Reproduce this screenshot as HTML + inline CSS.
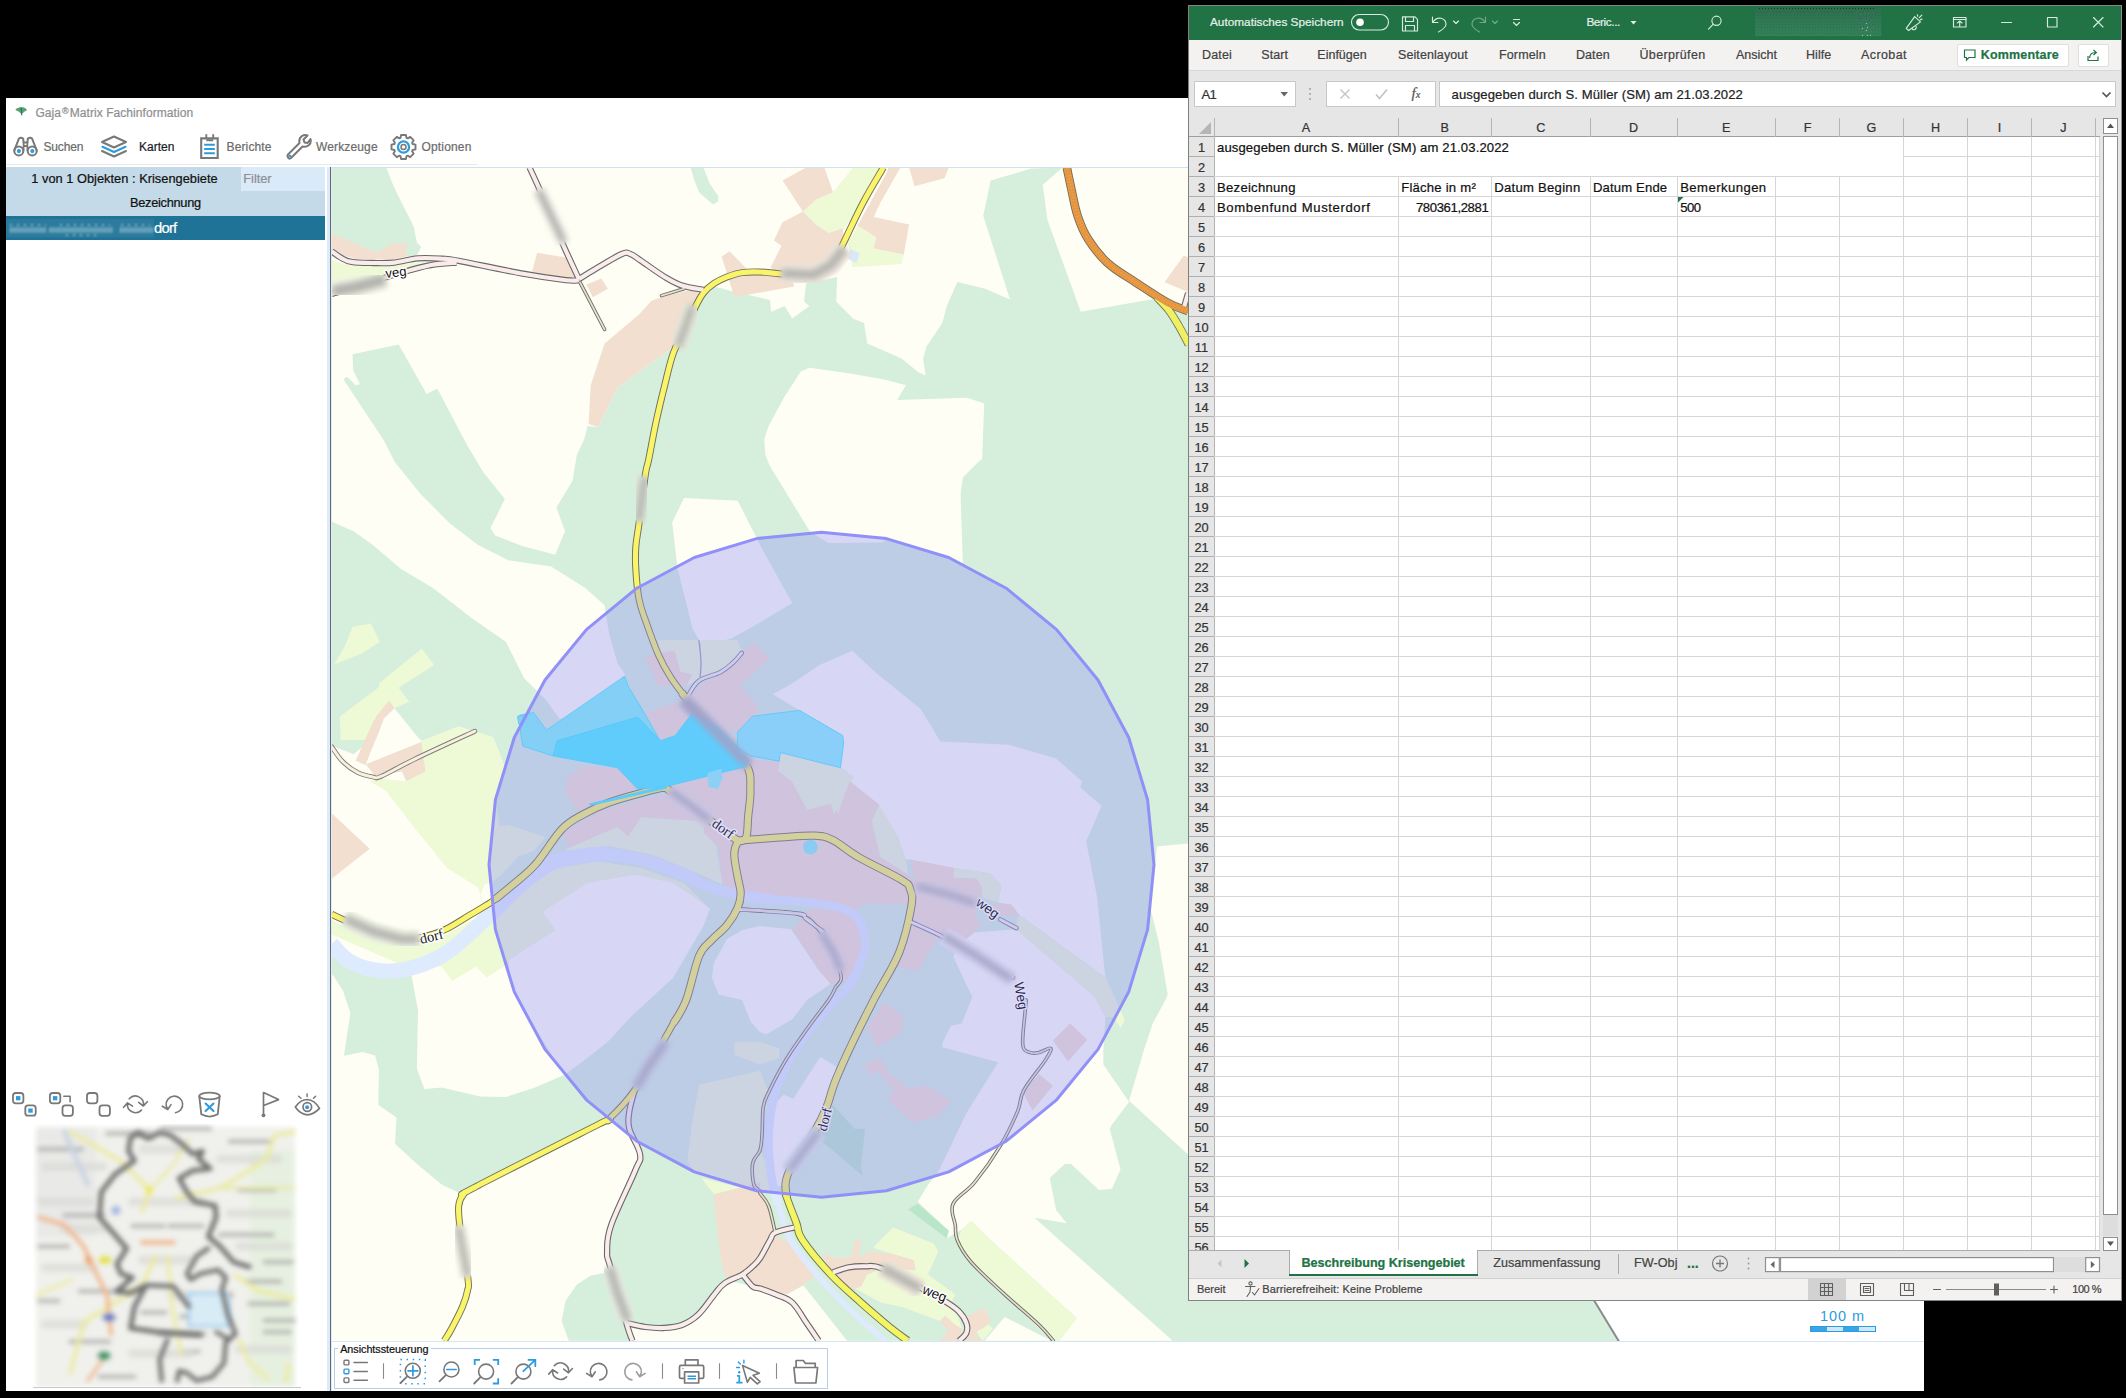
<!DOCTYPE html><html lang="de"><head><meta charset="utf-8"><title>Gaja Matrix Fachinformation</title><style>

*{box-sizing:border-box;margin:0;padding:0}
html,body{width:2126px;height:1398px;background:#000;overflow:hidden}
body{position:relative;font-family:"Liberation Sans",sans-serif;}
.abs,.t,svg{position:absolute}
.t{white-space:nowrap;line-height:1;transform-origin:0 0;-webkit-text-stroke:0.22px currentColor}
#gaja{position:absolute;left:6px;top:98px;width:1918px;height:1293px;background:#fff}
.gt{font-size:12.6px;color:#909090}
.tb{font-size:12.6px;color:#6a6a6a;top:141px}
.ic{fill:none;stroke:#787878;stroke-width:1.6;stroke-linecap:round;stroke-linejoin:round}
.ic2{fill:none;stroke:#787878;stroke-width:1.3;stroke-linecap:round;stroke-linejoin:round}
.bl{stroke:#2e9be0}
.blf{fill:#2e9be0;stroke:none}
.hd{font-size:12.6px;color:#111}


#xl{position:absolute;left:1188px;top:5px;width:934px;height:1296px;background:#e6e6e6;overflow:hidden}
#xl .t{color:#3b3b3b}
.xt{font-size:12.6px;color:#e4efe8 !important}
.xm{font-size:13.6px;top:48px;color:#404040 !important}
.xc{font-size:13.4px;color:#111 !important}
.xh{font-size:13.4px;color:#333 !important;text-align:center}
.xi{fill:none;stroke:#d6eadd;stroke-width:1.15;stroke-linecap:round;stroke-linejoin:round}
.xg{fill:none;stroke:#5f5f5f;stroke-width:1.1;stroke-linecap:round;stroke-linejoin:round}

</style></head><body>
<div id="gaja"></div>
<svg style="left:14px;top:105px" width="15" height="12" viewBox="14 105 15 12"><path d="M15.400 109.600 Q16 108 18.500 107.700 L20.500 107 L23 107.200 Q26 108 27 110 Q26 111.300 24.500 111.500 Q23 113 22.300 113.600 L21.700 115.500 L21 113.600 Q19.500 112.500 18.500 111.500 Q16.500 111.300 15.400 109.600Z" fill="#5ba274"/><path d="M21.500 108 L21.700 115.200" stroke="#2d7d50" stroke-width="1.100"/><circle cx="20.400" cy="109.600" r="0.600" fill="#2a70b0"/></svg>
<div class="t" style="left:35.40px;top:106.74px;font-size:12px;color:#8f8f8f;letter-spacing:0.065px;"><span>Gaja<span style="font-size:9px;position:relative;top:-3px;margin:0 1px">®</span>Matrix Fachinformation</span></div>
<svg style="left:12px;top:134px" width="28" height="26" viewBox="0 0 28 26">
<path class="ic" style="stroke-width:2" d="M2.300 16.500 L6.800 4.800 Q9 2.600 11.200 4.800 L11.600 8.500 L15.400 8.500 L15.800 4.800 Q18 2.600 20.200 4.800 L24.700 16.500"/>
<path class="ic" style="stroke-width:1.800" d="M11.600 8.500 L11.600 16.500 M15.400 8.500 L15.400 16.500 M11.600 12 L15.400 12"/>
<circle class="ic" style="stroke-width:2" cx="6.800" cy="16.900" r="4.500"/><circle class="ic" style="stroke-width:2" cx="20.200" cy="16.900" r="4.500"/>
<circle class="blf" cx="6.900" cy="17.100" r="2.100"/><circle class="blf" cx="20.300" cy="17.100" r="2.100"/></svg>
<div class="t" style="left:43.40px;top:141.04px;font-size:12px;color:#6c6c6c;letter-spacing:-0.117px;"><span>Suchen</span></div>
<svg style="left:100px;top:134px" width="28" height="26" viewBox="0 0 28 26">
<path class="ic" style="stroke-width:2" d="M14 2.500 L26 8 L14 13.500 L2 8 Z"/>
<path class="ic bl" style="stroke-width:2.200" d="M2.500 12.800 L14 18 L25.500 12.800"/>
<path class="ic" style="stroke-width:2" d="M2 17 L14 22.500 L26 17"/></svg>
<div class="t" style="left:139.00px;top:141.04px;font-size:12px;color:#1c1c28;letter-spacing:0.007px;"><span>Karten</span></div>
<svg style="left:199px;top:132px" width="22" height="28" viewBox="199 132 22 28">
<path class="ic" style="stroke-width:2.100;stroke-linejoin:miter" d="M201.200 138.400 L217.700 138.400 L217.700 158 L201.200 158 Z"/>
<path class="ic" style="stroke-width:1.900;stroke-linecap:butt" d="M206.300 134.300 L206.300 138.400 M213.200 134.300 L213.200 138.400 M206.300 140.300 L213.200 140.300"/>
<path class="ic bl" style="stroke-width:2;stroke-linecap:butt" d="M204.200 144.800 L214.800 144.800 M204.200 149 L214.800 149 M204.200 153.200 L214.800 153.200"/></svg>
<div class="t" style="left:226.50px;top:141.04px;font-size:12px;color:#6c6c6c;letter-spacing:0.134px;"><span>Berichte</span></div>
<svg style="left:285px;top:133px" width="27" height="28" viewBox="0 0 27 28">
<path class="ic" style="stroke-width:2" d="M3.500 25 Q1.500 23 3.500 21 L14.500 10 Q13.500 5.500 17 3 Q19.500 1.500 22.500 2.500 L18.500 6.500 L19.500 9.500 L22.500 10 L25.500 6 Q26.500 9.500 24 12 Q21 14.500 17.500 13.500 L6.500 24.500 Q5 26.500 3.500 25 Z"/>
<circle class="blf" cx="5" cy="23" r="1.300"/></svg>
<div class="t" style="left:316.00px;top:141.04px;font-size:12px;color:#6c6c6c;letter-spacing:0.135px;"><span>Werkzeuge</span></div>
<svg style="left:390.200px;top:133.600px" width="27" height="26" viewBox="0 0 27 26"><path class="ic" style="stroke-width:1.900" d="M25.5 10.6 L25.5 15.4 L22.6 16.0 L22.1 17.3 L23.7 19.7 L20.2 23.2 L17.8 21.6 L16.5 22.1 L15.9 25.0 L11.1 25.0 L10.5 22.1 L9.2 21.6 L6.8 23.2 L3.3 19.7 L4.9 17.3 L4.4 16.0 L1.5 15.4 L1.5 10.6 L4.4 10.0 L4.9 8.7 L3.3 6.3 L6.8 2.8 L9.2 4.4 L10.5 3.9 L11.1 1.0 L15.9 1.0 L16.5 3.9 L17.8 4.4 L20.2 2.8 L23.7 6.3 L22.1 8.7 L22.6 10.0Z"/><circle class="ic bl" style="stroke-width:2.300" cx="13.500" cy="13" r="5.600"/><circle class="ic" style="stroke-width:1.500" cx="13.500" cy="13" r="2.500"/></svg>
<div class="t" style="left:421.50px;top:141.04px;font-size:12px;color:#6c6c6c;letter-spacing:0.162px;"><span>Optionen</span></div>
<div class="abs" style="left:6px;top:164px;width:472px;height:1px;background:#e9e9e9"></div>
<div class="abs" style="left:6px;top:167px;width:320px;height:49px;background:#c4dae8"></div>
<div class="abs" style="left:241px;top:167px;width:84px;height:24px;background:#dbeaf8"></div>
<div class="t" style="left:31.30px;top:173.36px;font-size:12.8px;color:#111;letter-spacing:0.022px;"><span>1 von 1 Objekten : Krisengebiete</span></div>
<div class="t" style="left:243.30px;top:173.36px;font-size:12.8px;color:#8a8f96;letter-spacing:-0.023px;"><span>Filter</span></div>
<div class="t" style="left:130.00px;top:197.36px;font-size:12.8px;color:#111;letter-spacing:-0.291px;"><span>Bezeichnung</span></div>
<div class="abs" style="left:6px;top:216px;width:320px;height:24px;background:#1e7396"></div>
<svg style="left:6px;top:216px" width="170" height="24" viewBox="6 216 170 24"><defs><filter id="b3" filterUnits="userSpaceOnUse" x="0" y="210" width="180" height="36"><feGaussianBlur stdDeviation="0.9"/></filter></defs><rect x="6" y="219" width="148" height="18.500" fill="#2c7b9d"/><g filter="url(#b3)" fill="none" stroke="#a5cadb" stroke-width="5.500" stroke-dasharray="1.600 1.300" stroke-opacity="0.85"><path d="M10 230 L46 230"/><path d="M49.500 230 L113.500 230"/><path d="M120 230 L153 230"/></g><g filter="url(#b3)" fill="none" stroke="#a5cadb" stroke-width="2" stroke-dasharray="2 5" stroke-opacity="0.7"><path d="M10 225 L46 225 M60 225 L110 225 M121 225 L150 225 M66 235 L100 235"/></g></svg>
<div class="t" style="left:153.90px;top:221.07px;font-size:14.8px;color:#fff;letter-spacing:-0.725px;"><span>dorf</span></div>
<div class="abs" style="left:325px;top:167px;width:7px;height:1224px;background:#fff"></div>
<div class="abs" style="left:327px;top:167px;width:5px;height:1224px;background:#dcebf9"></div>
<div class="abs" style="left:329.800px;top:167px;width:1.200px;height:1224px;background:#686868"></div>
<div class="abs" style="left:332px;top:166.500px;width:1592px;height:1.500px;background:#cfe2f3"></div>
<svg id="map" style="left:332px;top:168px" width="1592" height="1173" viewBox="332 168 1592 1173">
<defs><filter id="bl" x="-30%" y="-30%" width="160%" height="160%"><feGaussianBlur stdDeviation="3"/></filter><filter id="bl2" x="-30%" y="-30%" width="160%" height="160%"><feGaussianBlur stdDeviation="1.6"/></filter><clipPath id="mc"><rect x="332" y="168" width="1592" height="1173"/></clipPath></defs>
<g clip-path="url(#mc)">
<rect x="332" y="168" width="1592" height="1173" fill="#fff"/>
<polygon points="332,168 1700,168 1593.4,1300 1619,1341.5 332,1341.5" fill="#fffef5"/>
<polygon points="331.7,167.5 386.2,167.5 394.4,187.9 413.7,226.5 416.9,242.6 421.2,246.9 418.0,253.3 415.8,256.6 331.7,256.6" fill="#d6efdd"/>
<polygon points="690.5,167.5 703.4,167.5 709.8,183.6 718.4,196.5 717.9,201.8 713.0,204.6 699.1,192.2 694.8,181.5" fill="#d6efdd"/>
<polygon points="352.5,354.2 398.7,344.5 426.6,393.9 437.3,388.5 467.3,445.4 483.4,472.2 504.9,499.0 490.5,528.0 495.2,535.5 523.1,546.2 555.3,554.8 565.0,531.2 556.4,507.6 572.5,480.8 576.8,455.0 584.3,438.9 587.5,426.1 598.2,427.1 617.5,387.4 673.3,346.7 681.9,329.5 692.6,303.8 699.1,293.0 707.6,285.5 770.0,300.0 822.0,865.0 505.9,769.4 493.1,737.2 458.7,726.4 420.1,741.5 379.4,732.9 353.6,754.3 331.7,745.7 331.7,521.5 343.3,379.3 347.2,376.7 355.7,385.3 360.0,384.2 353.2,370.3" fill="#d6efdd"/>
<polygon points="750.0,300.0 707.6,285.5 723.7,288.7 742.0,324.1 760.0,316.6 784.7,305.9 792.2,318.4 809.4,305.9 804.0,301.6 806.1,283.4 837.2,276.9 836.2,301.6 853.3,318.8 864.1,323.1 867.3,343.5 901.6,358.5 918.8,372.4 925.6,375.6 923.1,358.5 926.3,346.7 942.4,323.1 946.7,305.9 957.4,281.9 985.3,288.7 1010.0,299.5 983.2,215.8 990.7,180.4 1031.4,168.6 1062.5,167.5 1042.8,184.7 1047.5,220.1 1080.8,311.7 1163.4,297.3 1188.1,308.1 1188.1,344.5 1300.0,345.0 1593.4,1300.0 1619.0,1341.5 847.0,1340.7 803.5,1285.5 786.3,1294.6 760.0,1287.5 726.4,1280.5 714.3,1294.6 698.1,1314.8 681.9,1325.0 663.7,1328.0 645.5,1327.0 626.3,1322.9 610.1,1266.3 607.1,1252.1 611.1,1268.2 607.9,1253.2 611.1,1225.3 634.7,1171.7 640.1,1154.5 630.4,1137.3 700.0,1000.0 800.0,865.0" fill="#d6efdd"/>
<polygon points="821.5,532.2 886.4,538.6 948.7,557.5 1006.2,588.2 1056.6,629.6 1098.0,680.0 1128.7,737.5 1147.6,799.8 1154.0,864.7 1147.6,929.6 1128.7,991.9 1098.0,1049.4 1056.6,1099.8 1006.2,1141.2 948.7,1171.9 886.4,1190.8 821.5,1197.2 756.6,1190.8 694.3,1171.9 636.8,1141.2 586.4,1099.8 545.0,1049.4 514.3,991.9 495.4,929.6 489.0,864.7 495.4,799.8 514.3,737.5 545.0,680.0 586.4,629.6 636.8,588.2 694.3,557.5 756.6,538.6" fill="#d6efdd"/>
<polygon points="331.7,956.0 351.5,968.9 383.6,977.5 411.5,975.3 418.0,1010.7 416.9,1068.7 424.4,1089.0 441.6,1087.5 480.2,1096.6 505.9,1097.0 533.8,1088.0 563.9,1075.1 608.9,1096.6 608.9,1120.2 598.2,1124.5 475.9,1186.7 463.0,1194.8 441.6,1184.5 415.8,1163.1 395.0,1143.8 396.5,1117.6 378.3,1105.1 378.9,1069.7 375.1,1055.4 362.2,1052.1 343.9,1055.8 350.4,1012.9 342.9,990.4 331.7,973.2" fill="#d6efdd"/>
<polygon points="561.6,1320.9 565.6,1300.7 576.8,1284.5 590.9,1275.4 607.1,1272.4 613.2,1280.5 626.3,1322.9 632.4,1340.7 568.7,1340.7" fill="#d6efdd"/>
<polygon points="331.7,374.6 343.3,379.3 383.6,440.0 394.4,461.5 420.1,493.6 450.2,523.7 478.1,545.1 508.1,560.2 551.0,566.6 585.3,588.1 604.6,605.2 608.9,633.1 617.5,663.2 626.1,676.0 598.2,708.2 559.6,718.9 546.7,700.7 537.1,691.0 524.2,678.2 505.9,641.7 471.6,618.1 433.0,588.1 400.8,568.7 372.9,545.1 353.6,531.2 331.7,521.5" fill="#fffef5"/>
<polygon points="684.0,497.9 737.7,500.7 755.9,536.6 760.0,545.1 792.2,603.1 760.0,622.4 731.2,638.5 711.9,643.8 701.2,643.8 692.6,628.8 677.6,568.7 672.2,522.6" fill="#fffef5"/>
<polygon points="809.4,367.7 850.1,373.5 886.6,379.9 905.9,385.3 897.3,399.9 967.1,397.7 984.2,403.5 982.1,460.0 981.0,459.3 962.8,477.5 960.6,493.6 962.8,563.4 947.7,557.6 885.5,538.7 883.4,542.6 828.7,543.0 810.4,532.3 769.7,465.7 765.4,455.0 764.3,438.9 768.6,426.1 783.6,398.2 800.8,371.4" fill="#fffef5"/>
<polygon points="852.3,650.7 819.0,665.3 792.2,683.5 772.9,694.3 799.7,710.4 842.6,735.0 843.7,739.3 840.5,767.2 853.3,776.9 850.1,782.2 879.1,804.8 876.9,812.3 897.3,835.9 905.9,859.5 910.2,859.5 954.2,868.1 990.7,873.4 1001.4,885.2 998.2,902.4 1011.0,904.5 1019.6,915.3 1105.5,977.5 1105.5,979.6 1096.9,895.9 1086.1,841.2 1101.6,805.8 1080.1,787.6 1081.9,781.2 1056.1,758.6 1008.9,744.7 940.2,741.5 927.4,720.0 920.9,709.3 875.9,672.8" fill="#fffef5"/>
<polygon points="974.6,932.4 1016.4,929.2 1094.7,996.8 1105.5,1017.2 1103.3,1050.4 1103.3,1064.4 1129.1,1101.9 1111.9,1124.5 1109.7,1128.7 1120.5,1169.5 1111.9,1188.8 1099.0,1189.9 1071.1,1164.1 1064.7,1164.1 1049.7,1178.1 1056.1,1210.3 1066.8,1223.2 1034.6,1217.8 1059.3,1239.9 1172.6,1340.7 1059.4,1340.7 1076.5,1317.9 990.6,1240.0 971.4,1221.0 961.7,1229.6 946.7,1238.2 948.8,1230.7 917.7,1201.7 929.5,1182.4 935.9,1175.9 946.7,1154.5 966.0,1113.7 998.2,1062.2 942.4,1047.2 942.4,1042.9 951.0,1025.7 961.7,1023.6 972.4,996.8 966.0,983.9 953.1,956.0 966.0,938.9" fill="#fffef5"/>
<polygon points="1157.0,846.6 1188.1,843.4 1300.0,840.0 1300.0,1150.0 1188.1,1154.5 1129.1,1100.8 1144.1,1049.4 1152.7,1023.6 1165.5,1000.0 1167.7,994.6 1159.1,943.2 1150.5,908.8" fill="#fffef5"/>
<polygon points="1004.7,1316.9 1051.3,1340.7 984.5,1340.7 994.6,1329.0" fill="#fffef5"/>
<polygon points="331.7,259.8 349.3,265.6 392.2,265.6 430.8,260.8 394.4,271.6 331.7,297.3" fill="#eef9d5"/>
<polygon points="853.3,167.5 880.2,167.5 863.0,202.9 842.6,230.8 842.6,228.2 828.7,233.0 815.8,224.4 802.9,211.5 815.8,199.7 833.0,192.2" fill="#eef9d5"/>
<polygon points="848.0,242.6 857.6,225.4 876.3,237.2 873.7,248.4 903.8,254.4 901.6,264.1 852.3,267.3 850.1,254.4" fill="#eef9d5"/>
<polygon points="352.5,626.7 370.8,623.5 379.8,641.7 362.2,653.5 334.3,664.2 345.0,646.0" fill="#eef9d5"/>
<polygon points="421.8,648.6 434.1,664.9 398.7,687.8 409.4,701.8 394.4,708.2 389.0,700.7 376.1,716.8 367.5,740.0 340.7,740.0 339.7,716.8 379.4,686.8 378.9,683.5" fill="#eef9d5"/>
<polygon points="381.5,779.0 406.2,781.2 425.5,771.5 420.1,741.5 458.7,726.4 493.1,737.2 505.9,769.4 495.2,797.2 499.5,826.2 508.1,825.1 545.6,836.9 533.8,850.9 518.8,856.3 499.5,876.6 490.9,883.1 484.5,884.1 480.2,895.9 484.5,906.7 478.1,887.4 446.9,868.1 415.8,829.4 385.8,790.8 369.7,781.2" fill="#eef9d5"/>
<polygon points="331.7,919.5 342.9,926.0 372.9,938.9 405.1,945.3 424.4,943.2 445.9,934.6 469.5,921.7 490.9,908.8 523.1,887.4 555.3,868.1 598.2,861.6 641.1,868.1 684.0,883.1 709.8,908.8 703.4,926.0 555.3,930.3 508.1,960.3 504.9,965.7 486.6,977.5 475.9,966.8 452.3,980.7 441.6,966.8 400.8,964.6 331.7,934.6" fill="#eef9d5"/>
<polygon points="542.4,912.0 587.5,883.1 634.7,874.5 673.3,883.1 694.8,898.1 709.8,908.8 703.4,926.0 673.3,977.5 630.4,1017.2 608.9,1040.8 587.5,1057.9 563.9,1075.1 512.4,990.4 508.1,960.3 555.3,930.3" fill="#fffef5"/>
<polygon points="714.1,962.5 727.0,938.9 742.0,930.3 760.0,926.0 791.1,929.2 817.9,968.9 830.8,983.9 811.5,996.8 807.2,1000.0 792.2,1019.3 766.4,1034.3 760.0,1032.2 750.6,1021.5 742.0,1000.0 718.4,994.6 711.9,977.5" fill="#fffef5"/>
<polygon points="820.1,1056.9 836.2,1066.5 830.8,1090.1 824.4,1107.3 813.6,1133.0 792.2,1165.2 785.7,1182.4 775.0,1188.8 768.6,1139.5 771.8,1107.3 783.6,1094.4 793.3,1098.7" fill="#fffef5"/>
<polygon points="780.4,752.2 840.5,767.2 853.3,776.9 834.0,815.5 830.8,803.7 807.2,810.1 792.2,782.2 779.3,771.5" fill="#eef9d5"/>
<polygon points="871.6,820.8 879.1,804.8 897.3,835.9 905.9,859.5 908.1,874.5 880.2,857.3" fill="#eef9d5"/>
<polygon points="954.2,868.1 990.7,873.4 1001.4,885.2 998.2,902.4 982.1,898.1 982.1,887.4 976.7,878.8 953.1,877.7" fill="#eef9d5"/>
<polygon points="1017.5,917.4 1020.7,916.3 1105.5,977.5 1124.8,1020.0 1120.5,1027.9 1114.0,1017.2 1105.5,1017.2 1094.7,996.8 1016.4,929.2" fill="#eef9d5"/>
<polygon points="699.1,1084.8 760.0,1070.8 768.6,1092.3 762.1,1133.0 760.0,1150.2 770.7,1171.7 775.0,1193.1 760.0,1191.0 694.8,1171.7 687.3,1160.9 692.6,1120.2" fill="#eef9d5"/>
<polygon points="734.5,1041.8 760.0,1041.8 779.3,1048.3 779.3,1057.9 760.0,1064.4 742.0,1057.9 734.5,1054.7" fill="#eef9d5"/>
<polygon points="701.2,1178.1 750.6,1189.9 737.7,1188.8 714.1,1194.2" fill="#eef9d5"/>
<polygon points="875.9,1244.6 893.0,1227.4 933.8,1243.5 938.1,1251.0 938.0,1252.1 927.9,1274.4 955.2,1294.6 952.2,1300.7 962.3,1329.0 955.2,1325.0 945.1,1315.8 940.0,1320.9 901.6,1306.7 881.4,1302.7 855.1,1288.5 867.2,1274.4 881.4,1268.3 915.7,1270.3 913.7,1260.2 893.5,1254.2 873.3,1248.1" fill="#eef9d5"/>
<polygon points="961.7,1229.6 971.4,1221.0 990.6,1240.0 1076.5,1317.9 1059.4,1340.7 1051.3,1340.7 970.4,1262.2 957.4,1240.3" fill="#eef9d5"/>
<polygon points="976.4,1331.0 988.6,1323.9 992.6,1329.0 982.5,1340.7" fill="#eef9d5"/>
<polygon points="908.1,1209.2 917.7,1203.8 948.8,1230.7 946.7,1238.2" fill="#b9e5c9"/>
<polygon points="822.2,1128.7 833.0,1105.1 854.4,1128.7 865.1,1128.7 860.8,1167.4 863.0,1175.9 822.2,1141.6" fill="#b9e5c9"/>
<polygon points="331.7,234.0 376.1,252.3 391.2,243.7 406.8,243.0 406.2,256.6 394.4,259.8 355.7,259.1 340.7,254.4 331.7,249.0" fill="#f2dfd0"/>
<polygon points="537.1,252.7 566.0,257.6 576.8,276.9 566.0,278.0 532.1,271.6" fill="#f2dfd0"/>
<polygon points="586.4,284.5 601.4,278.4 607.9,288.7 592.8,297.3" fill="#f2dfd0"/>
<polygon points="721.6,256.6 729.5,251.2 745.2,267.3 750.6,271.6 760.0,269.9 790.0,276.9 792.2,280.2 794.3,286.6 760.0,292.6 734.5,297.3 729.1,280.2" fill="#f2dfd0"/>
<polygon points="661.5,297.3 694.8,288.7 699.1,293.0 692.6,303.8 681.9,329.5 673.3,346.7 617.5,387.4 598.2,427.1 588.6,423.9 590.7,385.3 604.6,343.5 639.0,314.5 651.9,300.5" fill="#f2dfd0"/>
<polygon points="782.5,180.4 806.1,167.5 824.4,167.5 833.0,192.2 815.8,199.7 802.9,211.5" fill="#f2dfd0"/>
<polygon points="802.9,211.5 815.8,224.4 828.7,233.0 842.6,228.2 844.8,244.8 835.1,258.7 822.2,270.5 802.9,275.9 779.3,274.8 770.7,267.3 781.5,245.8 773.9,240.5 782.5,222.2" fill="#f2dfd0"/>
<polygon points="888.7,167.5 900.5,167.5 880.2,202.9 873.7,216.9 909.1,224.4 903.8,254.4 873.7,248.4 876.3,237.2 857.6,225.4 886.6,172.9" fill="#f2dfd0"/>
<polygon points="909.1,167.5 948.8,167.5 944.5,178.2 914.5,186.2" fill="#f2dfd0"/>
<polygon points="1164.5,282.3 1183.8,255.5 1188.1,257.6 1188.1,292.0" fill="#f2dfd0"/>
<polygon points="389.0,700.7 394.4,708.2 383.6,718.9 376.1,740.0 367.5,740.0 376.1,716.8" fill="#f2dfd0"/>
<polygon points="394.4,708.2 420.1,740.0 376.1,740.0 383.6,718.9" fill="#fffef5"/>
<polygon points="374.0,720.0 383.6,720.0 365.4,765.1 355.7,760.8" fill="#f2dfd0"/>
<polygon points="365.4,764.0 421.2,741.5 425.5,771.5 406.2,781.2 401.9,771.5 375.1,775.8" fill="#f2dfd0"/>
<polygon points="383.6,720.0 398.7,720.0 422.3,741.5 366.5,764.0" fill="#fffef5"/>
<polygon points="331.7,813.3 369.7,848.7 331.7,878.8" fill="#f2dfd0"/>
<polygon points="713.5,1194.5 760.0,1182.4 760.0,1194.2 768.6,1206.0 772.9,1231.7 785.7,1242.5 813.6,1276.8 803.9,1284.6 786.7,1294.3 758.8,1287.3 748.0,1275.5 742.7,1273.3 726.6,1276.6 720.2,1255.0" fill="#f2dfd0"/>
<polygon points="760.0,1240.0 788.3,1240.0 814.6,1274.4 786.3,1294.6 760.0,1287.5 742.6,1273.4 727.5,1279.4 722.4,1268.3 720.4,1240.0" fill="#f2dfd0"/>
<polygon points="746.7,1274.4 760.0,1258.2 760.0,1288.5 753.7,1285.5" fill="#f2dfd0"/>
<polygon points="821.7,1253.1 836.9,1258.2 851.0,1257.2 855.1,1240.0 861.1,1240.0 859.1,1258.2 869.2,1251.1 893.5,1254.2 913.7,1260.2 915.7,1270.3 881.4,1268.3 867.2,1274.4 861.1,1286.5 853.0,1289.6 834.8,1274.4 828.8,1270.3" fill="#f2dfd0"/>
<polygon points="940.0,1320.9 945.1,1315.8 955.2,1325.0 962.3,1329.0 962.3,1340.7 940.0,1340.7 948.1,1331.0" fill="#f2dfd0"/>
<polygon points="968.3,1315.8 983.5,1307.8 991.6,1320.9 984.5,1327.0 974.4,1333.0 982.5,1340.7 966.3,1340.7" fill="#f2dfd0"/>
<polygon points="850.1,249.0 859.8,253.3 856.6,263.0 848.0,258.7" fill="#d9e8fb"/>
<polygon points="867.3,1027.9 884.5,1002.1 903.8,1017.2 901.6,1032.2 876.9,1047.2" fill="#f2dfd0"/>
<polygon points="865.1,1064.4 880.2,1056.9 888.7,1073.0 908.1,1088.0 927.4,1085.8 951.0,1100.8 938.1,1115.9 912.3,1122.3 887.7,1099.8 893.0,1090.1 879.1,1071.9 869.4,1075.1" fill="#f2dfd0"/>
<polygon points="1052.9,1040.8 1070.1,1023.6 1087.2,1039.7 1067.9,1061.2" fill="#f2dfd0"/>
<polygon points="1022.8,1092.3 1038.9,1074.0 1052.9,1085.8 1032.5,1110.5" fill="#f2dfd0"/>
<polygon points="565.8,849.2 580.8,842.8 617.3,826.7 628.1,836.3 640.9,817.0 703.2,821.3 704.2,832.0 716.0,844.9 722.5,884.6 694.6,871.7 651.7,854.6 608.7,846.0 576.6,854.6" fill="#eef9d5"/>
<polygon points="658.1,640.0 698.9,640.0 701.0,678.6 686.0,686.1 692.4,674.3 680.6,672.2 674.2,650.7 660.2,652.9" fill="#eef9d5"/>
<polygon points="701.0,640.0 737.5,640.0 741.8,650.7 720.3,672.2 701.0,680.8" fill="#eef9d5"/>
<polygon points="645.2,656.1 674.2,650.7 680.6,672.2 692.4,674.3 686.0,686.1 658.1,686.1" fill="#f2dfd0"/>
<polygon points="698.9,686.1 720.3,672.2 753.6,642.1 769.7,658.2 739.6,686.1 758.9,707.6 751.4,721.5 737.5,732.3 716.0,725.8 692.4,713.0 675.3,735.5 660.2,740.8 646.3,713.0 686.0,699.0" fill="#f2dfd0"/>
<polygon points="564.8,790.2 566.9,777.3 583.0,766.6 617.3,768.1 637.7,789.6 591.6,805.2 576.6,811.7" fill="#f2dfd0"/>
<polygon points="562.6,833.1 600.2,810.6 643.1,798.8 668.8,793.4 735.3,834.2 733.2,840.6 716.0,844.9 704.2,832.0 703.2,821.3 640.9,817.0 628.1,836.3 617.3,826.7 580.8,842.8 568.0,848.1" fill="#f2dfd0"/>
<polygon points="749.3,760.2 780.4,761.2 779.3,771.5 792.2,782.2 807.2,810.1 830.8,803.7 834.0,815.5 850.1,781.2 879.1,804.8 871.6,820.8 880.2,857.3 908.1,874.5 914.5,883.1 910.2,859.5 954.2,868.1 953.1,877.7 976.7,878.8 982.1,887.4 978.9,902.4 974.6,913.1 981.0,926.0 966.0,938.9 940.2,934.6 929.5,951.7 917.7,971.0 897.3,966.8 908.1,923.8 908.1,904.5 867.3,903.5 852.3,911.0 809.4,902.4 760.0,898.1 740.7,893.2 736.4,876.0 734.3,851.4 746.1,837.4 751.4,790.2" fill="#f2dfd0"/>
<polygon points="990.7,903.5 1011.0,904.5 1019.6,915.3 1002.5,916.3" fill="#f2dfd0"/>
<polygon points="792.2,929.2 809.4,908.8 852.3,911.0 860.8,923.8 860.8,962.5 842.6,983.9 830.8,983.9 817.9,968.9" fill="#f2dfd0"/>
<polygon points="703.2,832.0 735.3,833.1 733.2,851.4 737.5,876.0 739.6,892.1 722.5,884.6 718.2,846.0" fill="#f2dfd0"/>
<polygon points="663.5,788.1 746.1,766.2 750.8,790.2 747.1,837.4 735.8,834.8 668.8,793.6" fill="#f2dfd0"/>
<polygon points="780.4,753.7 853.4,775.2 849.1,781.6 838.3,813.8 831.9,803.1 808.3,809.5 791.1,779.5 778.3,770.9" fill="#eef9d5"/>
<path d="M331.7 944.2 C335.3 947.5 342.1 957.6 351.5 962.5 C360.8 967.3 372.1 970.3 383.6 971.0 C395.2 971.8 404.2 970.2 415.8 966.8 C427.4 963.3 436.4 959.5 448.0 951.7 C459.6 944.0 471.9 931.2 480.2 923.8 C488.5 916.5 486.4 918.3 494.1 911.0 C501.9 903.6 512.1 892.0 523.1 883.1 C534.1 874.2 541.8 866.8 555.3 861.6 C568.8 856.4 588.6 855.3 598.2 854.1 C607.9 852.9 607.0 854.6 608.9 854.7" fill="none" stroke="#deeafe" stroke-width="15" stroke-linejoin="round" stroke-linecap="butt"/>
<path d="M587.5 855.2 C589.4 855.0 588.6 853.3 598.2 854.1 C607.9 854.9 625.7 855.8 641.1 859.5 C656.6 863.1 674.4 870.9 684.0 874.5 C693.7 878.0 692.8 878.4 694.8 879.2" fill="none" stroke="#deeafe" stroke-width="12" stroke-linejoin="round" stroke-linecap="butt"/>
<path d="M673.3 870.2 C675.2 871.0 676.3 871.0 684.0 874.5 C691.8 878.0 702.6 885.3 716.2 889.5 C729.9 893.8 749.8 896.2 760.0 898.1 C770.2 899.9 770.6 899.5 772.9 899.8" fill="none" stroke="#deeafe" stroke-width="10" stroke-linejoin="round" stroke-linecap="butt"/>
<path d="M716.2 889.5 C724.1 891.1 752.1 896.4 760.0 898.1 C767.9 899.8 751.1 898.4 760.0 899.2 C768.9 899.9 793.9 900.5 809.4 902.4 C824.8 904.3 836.6 906.0 845.8 909.9 C855.1 913.8 857.4 917.5 860.8 923.8 C864.3 930.2 865.1 938.3 865.1 945.3 C865.1 952.2 864.3 954.4 860.8 962.5 C857.4 970.6 850.5 983.6 845.8 990.4 C841.2 997.1 842.8 991.3 835.1 1000.0 C827.4 1008.7 812.6 1025.1 802.9 1038.6 C793.3 1052.1 787.1 1062.7 781.5 1075.1 C775.9 1087.5 774.1 1095.7 771.8 1107.3 C769.5 1118.9 768.8 1127.9 768.6 1139.5 C768.4 1151.1 769.6 1162.0 770.7 1171.7 C771.9 1181.3 773.7 1187.3 775.0 1193.1 C776.4 1198.9 777.7 1201.9 778.2 1203.8" fill="none" stroke="#deeafe" stroke-width="8.5" stroke-linejoin="round" stroke-linecap="butt"/>
<path d="M772.9 1184.5 C773.3 1186.1 773.5 1187.7 775.0 1193.1 C776.6 1198.5 778.7 1206.1 781.5 1214.6 C784.2 1223.0 784.0 1229.2 790.3 1240.0 C796.7 1250.8 806.8 1262.7 816.6 1274.4 C826.5 1286.0 835.5 1295.3 845.0 1304.7 C854.4 1314.2 861.9 1320.5 869.2 1327.0 C876.5 1333.5 882.5 1338.3 885.4 1340.7" fill="none" stroke="#deeafe" stroke-width="6" stroke-linejoin="round" stroke-linecap="butt"/>
<path d="M580.0 282.3 L604.6 329.5" fill="none" stroke="#707068" stroke-width="3.6" stroke-linejoin="round" stroke-linecap="round"/>
<path d="M661.5 295.6 L684.0 288.7" fill="none" stroke="#707068" stroke-width="3.6" stroke-linejoin="round" stroke-linecap="round"/>
<path d="M456.6 262.6 C452.0 263.0 440.1 263.5 430.8 265.1 C421.6 266.8 422.9 266.4 405.1 271.6 C387.3 276.8 344.9 290.1 331.7 294.1" fill="none" stroke="#686868" stroke-width="6.3" stroke-linejoin="round" stroke-linecap="butt"/>
<path d="M331.7 251.2 C333.3 252.4 337.2 255.7 340.7 257.6 C344.3 259.6 345.7 261.0 351.5 261.9 C357.3 262.9 365.2 262.9 372.9 263.0 C380.6 263.1 386.3 263.4 394.4 262.6 C402.5 261.7 409.5 259.0 418.0 258.3 C426.5 257.6 434.2 258.2 441.6 258.7 C448.9 259.2 444.1 258.1 458.7 260.8 C473.4 263.6 503.8 270.2 523.1 273.7 C542.4 277.2 556.0 279.0 566.0 280.2 C576.1 281.3 576.6 280.2 578.9 280.2" fill="none" stroke="#686868" stroke-width="6.3" stroke-linejoin="round" stroke-linecap="butt"/>
<path d="M529.5 167.5 C532.3 173.5 538.8 187.4 544.6 200.8 C550.4 214.1 555.6 227.4 561.7 241.5 C567.9 255.6 575.8 272.3 578.9 279.1" fill="none" stroke="#686868" stroke-width="6.3" stroke-linejoin="round" stroke-linecap="butt"/>
<path d="M578.9 279.1 C582.4 277.0 590.5 271.8 598.2 267.3 C605.9 262.8 616.0 256.4 621.8 254.0 C627.6 251.6 626.9 252.7 630.4 254.0 C633.9 255.2 634.9 256.7 641.1 260.8 C647.3 265.0 657.4 272.5 664.7 276.9 C672.1 281.4 674.9 283.2 681.9 285.5 C688.8 287.8 699.5 289.0 703.4 289.8" fill="none" stroke="#686868" stroke-width="6.3" stroke-linejoin="round" stroke-linecap="butt"/>
<path d="M331.7 746.8 C333.7 749.5 338.2 757.2 342.9 761.8 C347.6 766.5 352.5 769.9 357.9 772.6 C363.3 775.3 368.7 776.2 372.9 776.9 C377.2 777.5 373.8 779.5 381.5 776.2 C389.2 772.9 399.0 766.7 415.8 758.6 C432.6 750.5 464.2 736.1 474.8 731.2" fill="none" stroke="#7d7d7d" stroke-width="4.8" stroke-linejoin="round" stroke-linecap="round"/>
<path d="M688.1 695.8 C690.1 693.1 693.1 685.0 698.9 680.8 C704.7 676.5 714.1 675.5 720.3 672.2 C726.5 668.9 729.3 666.0 733.2 662.5 C737.1 659.1 740.2 654.6 741.8 652.9" fill="none" stroke="#7d7d7d" stroke-width="4.6" stroke-linejoin="round" stroke-linecap="round"/>
<path d="M698.9 640.0 C699.2 643.9 700.8 654.3 701.0 661.5 C701.2 668.6 700.1 676.4 699.9 679.7" fill="none" stroke="#9a96b0" stroke-width="1.2" stroke-linejoin="round" stroke-linecap="butt"/>
<path d="M737.5 909.3 C748.3 910.1 785.2 911.8 797.6 913.6 C809.9 915.3 801.5 915.7 806.1 918.9 C810.8 922.2 820.2 929.5 823.3 931.8" fill="none" stroke="#7d7d7d" stroke-width="4.6" stroke-linejoin="round" stroke-linecap="round"/>
<path d="M910.2 921.7 C916.0 924.4 930.8 930.5 942.4 936.7 C954.0 942.9 961.8 948.7 974.6 956.0 C987.3 963.4 1006.2 973.6 1013.2 977.5" fill="none" stroke="#7d7d7d" stroke-width="4.6" stroke-linejoin="round" stroke-linecap="round"/>
<path d="M1000.3 919.5 L1016.4 928.1" fill="none" stroke="#7d7d7d" stroke-width="4.6" stroke-linejoin="round" stroke-linecap="round"/>
<path d="M1022.8 1007.5 C1023.4 1006.2 1025.7 999.0 1026.1 1000.0 C1026.5 1001.0 1025.6 1004.8 1025.0 1012.9 C1024.4 1021.0 1021.9 1037.9 1022.8 1045.1 C1023.8 1052.2 1027.5 1051.2 1030.4 1052.6 C1033.3 1053.9 1035.3 1053.3 1038.9 1052.6 C1042.6 1051.8 1049.6 1046.9 1050.7 1048.3 C1051.9 1049.6 1050.2 1052.5 1045.4 1060.1 C1040.5 1067.6 1028.9 1080.8 1023.9 1090.1 C1018.9 1099.4 1021.7 1101.5 1017.5 1111.6 C1013.2 1121.6 1008.0 1133.2 1000.3 1145.9 C992.6 1158.7 983.1 1172.0 974.6 1182.4 C966.1 1192.8 956.6 1196.1 953.1 1203.8 C949.6 1211.6 954.5 1218.8 955.3 1225.3 C956.0 1231.8 954.5 1233.5 957.2 1240.0 C959.9 1246.5 962.2 1251.8 970.4 1261.2 C978.5 1270.7 990.3 1281.1 1002.7 1292.6 C1015.1 1304.1 1030.0 1316.3 1039.1 1325.0 C1048.2 1333.6 1050.7 1337.9 1053.3 1340.7" fill="none" stroke="#707068" stroke-width="3.6" stroke-linejoin="round" stroke-linecap="round"/>
<path d="M737.7 908.8 C741.7 909.2 756.0 910.6 760.0 911.0 C764.0 911.4 753.0 910.4 760.0 911.0 C767.0 911.5 787.8 910.5 798.6 914.2 C809.4 917.9 812.5 920.7 820.1 931.4 C827.6 942.0 837.8 963.0 840.5 973.2 C843.2 983.4 837.2 983.4 835.1 988.2 C833.0 993.0 833.3 993.2 828.7 1000.0 C824.0 1006.8 817.1 1014.9 809.4 1025.7 C801.6 1036.6 793.1 1048.1 785.7 1060.1 C778.4 1072.1 772.6 1083.8 768.6 1092.3 C764.5 1100.8 764.4 1099.9 763.2 1107.3 C762.1 1114.6 762.7 1125.3 762.1 1133.0 C761.6 1140.8 761.7 1144.8 760.0 1150.2 C758.3 1155.6 753.8 1156.9 752.7 1163.1 C751.6 1169.3 752.5 1179.5 753.8 1184.5 C755.1 1189.6 758.9 1189.4 760.0 1191.0 C761.1 1192.5 758.5 1190.4 760.0 1193.1 C761.5 1195.8 765.9 1199.0 768.6 1206.0 C771.3 1212.9 773.9 1227.1 775.0 1231.7" fill="none" stroke="#707068" stroke-width="3.6" stroke-linejoin="round" stroke-linecap="round"/>
<path d="M634.7 1090.1 C633.7 1094.0 630.3 1104.6 629.3 1111.6 C628.4 1118.5 627.4 1121.0 629.3 1128.7 C631.3 1136.5 639.1 1146.8 640.1 1154.5 C641.0 1162.2 639.9 1158.9 634.7 1171.7 C629.5 1184.4 616.1 1210.8 611.1 1225.3 C606.1 1239.8 607.3 1244.8 607.1 1252.1 C606.9 1259.5 606.7 1253.6 610.1 1266.3 C613.6 1279.0 622.3 1309.5 626.3 1322.9 C630.3 1336.3 631.3 1337.5 632.4 1340.7" fill="none" stroke="#686868" stroke-width="6.3" stroke-linejoin="round" stroke-linecap="butt"/>
<path d="M626.3 1322.9 C629.8 1323.7 638.8 1326.1 645.5 1327.0 C652.3 1327.9 657.2 1328.3 663.7 1328.0 C670.3 1327.6 675.8 1327.3 681.9 1325.0 C688.1 1322.6 692.3 1320.3 698.1 1314.8 C703.9 1309.4 709.6 1300.3 714.3 1294.6 C719.0 1289.0 719.3 1287.1 724.4 1283.5 C729.5 1279.8 737.5 1277.5 742.6 1274.4 C747.7 1271.3 749.6 1269.2 752.7 1266.3 C755.9 1263.4 756.9 1262.9 760.0 1258.2 C763.1 1253.5 767.4 1244.6 770.1 1240.0 C772.8 1235.4 770.7 1235.1 775.0 1232.8 C779.4 1230.5 790.9 1228.4 794.3 1227.4" fill="none" stroke="#686868" stroke-width="6.3" stroke-linejoin="round" stroke-linecap="butt"/>
<path d="M742.6 1274.4 C744.4 1276.6 749.6 1284.0 752.7 1286.5 C755.9 1289.1 755.8 1287.1 760.0 1288.5 C764.2 1290.0 770.4 1292.1 776.2 1294.6 C782.0 1297.2 786.9 1297.6 792.4 1302.7 C797.8 1307.8 801.8 1316.1 806.5 1322.9 C811.3 1329.8 816.5 1337.5 818.7 1340.7" fill="none" stroke="#686868" stroke-width="6.3" stroke-linejoin="round" stroke-linecap="butt"/>
<path d="M832.8 1272.4 C835.7 1271.5 843.2 1268.4 849.0 1267.3 C854.8 1266.2 859.4 1266.1 865.2 1266.3 C871.0 1266.5 871.2 1264.3 881.4 1268.3 C891.6 1272.3 910.5 1282.7 921.8 1288.5 C933.1 1294.4 937.5 1296.7 944.1 1300.7 C950.6 1304.7 954.2 1306.8 958.2 1310.8 C962.2 1314.8 964.9 1318.9 966.3 1322.9 C967.8 1326.9 967.6 1329.8 966.3 1333.0 C965.0 1336.2 960.5 1339.3 959.2 1340.7" fill="none" stroke="#686868" stroke-width="6.3" stroke-linejoin="round" stroke-linecap="butt"/>
<path d="M1183.8 308.1 L1188.1 293.0" fill="none" stroke="#686868" stroke-width="6.3" stroke-linejoin="round" stroke-linecap="butt"/>
<path d="M1157.0 297.3 C1159.1 299.6 1164.9 305.2 1168.8 310.2 C1172.6 315.2 1174.8 319.0 1178.4 325.2 C1182.0 331.4 1186.9 341.1 1188.7 344.5" fill="none" stroke="#77775c" stroke-width="8.2" stroke-linejoin="round" stroke-linecap="butt"/>
<path d="M1066.8 167.5 C1067.6 171.2 1069.2 179.2 1071.1 187.9 C1073.1 196.6 1074.5 206.5 1077.6 215.8 C1080.7 225.1 1082.9 230.9 1088.3 239.4 C1093.7 247.9 1099.1 255.3 1107.6 263.0 C1116.1 270.7 1124.7 275.2 1135.5 282.3 C1146.3 289.4 1158.2 297.5 1167.7 302.7 C1177.1 307.9 1184.4 309.7 1188.1 311.3" fill="none" stroke="#746c58" stroke-width="8.6" stroke-linejoin="round" stroke-linecap="butt"/>
<path d="M883.4 167.5 C879.7 173.9 870.3 189.0 863.0 202.9 C855.7 216.8 847.6 234.7 842.6 244.8 C837.6 254.8 838.8 254.1 835.1 258.7 C831.4 263.3 828.0 267.6 822.2 270.5 C816.4 273.4 810.6 274.2 802.9 274.8 C795.2 275.4 787.0 274.2 779.3 273.7 C771.6 273.2 766.7 272.2 760.0 272.0 C753.3 271.8 747.9 271.8 742.0 272.6 C736.0 273.5 732.0 275.0 727.0 276.9 C721.9 278.9 718.3 280.5 714.1 283.4 C709.8 286.3 706.8 288.6 703.4 293.0 C699.9 297.5 698.2 301.1 694.8 308.1 C691.3 315.0 687.9 323.5 684.0 331.7 C680.2 339.8 676.8 343.5 673.3 353.1 C669.8 362.8 667.8 372.9 664.7 385.3 C661.6 397.7 659.0 408.3 656.1 421.8 C653.2 435.2 650.6 450.5 648.6 460.0 C646.7 469.4 647.2 462.9 645.4 474.3 C643.7 485.8 640.7 510.6 639.0 523.7 C637.2 536.8 636.3 539.2 635.8 547.3 C635.2 555.4 635.2 559.5 635.8 568.7 C636.3 578.0 637.2 589.5 639.0 598.8 C640.7 608.1 641.9 610.2 645.4 620.2 C648.9 630.3 653.7 644.1 658.3 654.6 C662.9 665.0 666.2 670.4 671.2 678.2 C676.2 686.0 683.3 694.4 686.0 697.9" fill="none" stroke="#70705a" stroke-width="7.0" stroke-linejoin="round" stroke-linecap="butt"/>
<path d="M681.7 692.6 C682.5 693.5 679.8 691.2 686.0 697.9 C692.2 704.7 705.2 718.1 716.0 730.1 C726.8 742.1 739.9 753.6 746.1 764.5 C752.2 775.3 750.0 780.9 750.4 790.2 C750.7 799.5 749.0 807.4 748.2 815.9 C747.4 824.4 748.0 832.6 746.1 837.4 C744.1 842.2 739.6 839.7 737.5 842.8 C735.4 845.9 734.3 848.6 734.3 854.6 C734.3 860.6 736.3 869.1 737.5 876.0 C738.6 883.0 740.7 887.4 740.7 893.2 C740.7 899.0 740.0 902.4 737.5 908.2 C735.0 914.0 731.4 919.7 726.8 925.4 C722.1 931.1 716.7 934.5 711.7 940.0 C706.7 945.5 703.7 945.2 699.1 956.0 C694.5 966.8 690.8 987.8 686.2 1000.0 C681.6 1012.2 675.6 1019.4 673.3 1023.6" fill="none" stroke="#70705a" stroke-width="8.2" stroke-linejoin="round" stroke-linecap="butt"/>
<path d="M675.5 1019.3 C673.5 1022.8 672.1 1025.9 664.7 1038.6 C657.4 1051.4 644.7 1075.6 634.7 1090.1 C624.6 1104.6 615.5 1112.9 608.9 1119.1 C602.4 1125.3 622.2 1112.3 598.2 1124.5 C574.3 1136.6 500.2 1173.9 475.9 1186.7 C451.6 1199.4 466.1 1191.8 463.0 1195.3 C459.9 1198.7 459.3 1200.6 458.7 1206.0 C458.2 1211.4 458.2 1212.3 459.8 1225.3 C461.5 1238.3 466.6 1266.7 467.9 1278.4 C469.3 1290.2 468.5 1285.5 467.5 1290.6 C466.6 1295.7 465.4 1299.8 462.5 1306.7 C459.6 1313.7 454.6 1322.9 451.4 1329.0 C448.1 1335.1 445.6 1338.6 444.3 1340.7" fill="none" stroke="#70705a" stroke-width="7.0" stroke-linejoin="round" stroke-linecap="butt"/>
<path d="M331.7 914.2 C333.7 915.2 335.5 916.3 342.9 919.5 C350.3 922.8 361.7 928.9 372.9 932.4 C384.1 935.9 395.8 938.1 405.1 938.9 C414.4 939.6 417.1 938.5 424.4 936.7 C431.7 935.0 437.8 933.1 445.9 929.2 C454.0 925.3 461.4 920.1 469.5 915.3 C477.6 910.4 485.1 906.2 490.9 902.4 C496.7 898.6 499.7 895.7 501.7 894.2" fill="none" stroke="#70705a" stroke-width="7.0" stroke-linejoin="round" stroke-linecap="butt"/>
<path d="M495.2 899.2 C498.3 896.7 505.0 891.6 512.4 885.2 C519.7 878.8 527.1 873.8 536.0 863.8 C544.9 853.7 553.2 838.3 561.7 829.4 C570.2 820.5 574.7 819.2 583.2 814.4 C591.7 809.6 598.5 806.5 608.9 802.6 C619.4 798.7 631.1 795.7 641.1 793.0 C651.2 790.2 659.3 787.8 664.7 787.6 C670.1 787.4 658.1 782.3 671.2 791.9 C684.3 801.4 725.5 831.8 737.5 840.6" fill="none" stroke="#70705a" stroke-width="8.2" stroke-linejoin="round" stroke-linecap="butt"/>
<path d="M737.5 840.6 C745.2 840.0 766.5 838.3 780.4 837.4 C794.3 836.5 805.3 835.2 814.7 835.7 C824.2 836.2 825.0 836.3 833.0 840.2 C840.9 844.1 846.3 850.2 858.7 857.3 C871.1 864.5 892.3 874.1 901.6 879.9 C910.9 885.6 908.5 884.7 910.2 889.5 C911.9 894.3 913.2 895.5 911.3 906.7 C909.3 917.9 905.1 937.1 899.5 951.7 C893.9 966.4 884.8 979.5 880.2 988.2 C875.5 996.9 878.7 990.2 873.7 1000.0 C868.7 1009.8 859.2 1028.2 852.3 1042.9 C845.3 1057.6 839.7 1069.9 835.1 1081.5 C830.5 1093.1 830.4 1098.0 826.5 1107.3 C822.7 1116.6 819.8 1122.6 813.6 1133.0 C807.5 1143.5 797.2 1156.3 792.2 1165.2 C787.2 1174.1 786.7 1176.6 785.7 1182.4 C784.8 1188.2 786.6 1194.7 786.8 1197.4" fill="none" stroke="#70705a" stroke-width="8.2" stroke-linejoin="round" stroke-linecap="butt"/>
<path d="M786.0 1188.8 C786.1 1190.4 784.9 1191.2 786.8 1197.4 C788.7 1203.6 793.7 1215.5 796.5 1223.2 C799.3 1230.8 796.3 1230.8 802.5 1240.0 C808.7 1249.2 820.2 1263.1 830.8 1274.4 C841.4 1285.7 850.6 1293.2 861.1 1302.7 C871.7 1312.2 881.1 1320.1 889.4 1327.0 C897.8 1333.8 904.4 1338.3 907.7 1340.7" fill="none" stroke="#70705a" stroke-width="7.8" stroke-linejoin="round" stroke-linecap="butt"/>
<path d="M580.0 282.3 L604.6 329.5" fill="none" stroke="#e6e1d0" stroke-width="1.7" stroke-linejoin="round" stroke-linecap="round"/>
<path d="M661.5 295.6 L684.0 288.7" fill="none" stroke="#e6e1d0" stroke-width="1.7" stroke-linejoin="round" stroke-linecap="round"/>
<path d="M456.6 262.6 C452.0 263.0 440.1 263.5 430.8 265.1 C421.6 266.8 422.9 266.4 405.1 271.6 C387.3 276.8 344.9 290.1 331.7 294.1" fill="none" stroke="#fbecec" stroke-width="4.1" stroke-linejoin="round" stroke-linecap="butt"/>
<path d="M331.7 251.2 C333.3 252.4 337.2 255.7 340.7 257.6 C344.3 259.6 345.7 261.0 351.5 261.9 C357.3 262.9 365.2 262.9 372.9 263.0 C380.6 263.1 386.3 263.4 394.4 262.6 C402.5 261.7 409.5 259.0 418.0 258.3 C426.5 257.6 434.2 258.2 441.6 258.7 C448.9 259.2 444.1 258.1 458.7 260.8 C473.4 263.6 503.8 270.2 523.1 273.7 C542.4 277.2 556.0 279.0 566.0 280.2 C576.1 281.3 576.6 280.2 578.9 280.2" fill="none" stroke="#fbecec" stroke-width="4.1" stroke-linejoin="round" stroke-linecap="butt"/>
<path d="M529.5 167.5 C532.3 173.5 538.8 187.4 544.6 200.8 C550.4 214.1 555.6 227.4 561.7 241.5 C567.9 255.6 575.8 272.3 578.9 279.1" fill="none" stroke="#fbecec" stroke-width="4.1" stroke-linejoin="round" stroke-linecap="butt"/>
<path d="M578.9 279.1 C582.4 277.0 590.5 271.8 598.2 267.3 C605.9 262.8 616.0 256.4 621.8 254.0 C627.6 251.6 626.9 252.7 630.4 254.0 C633.9 255.2 634.9 256.7 641.1 260.8 C647.3 265.0 657.4 272.5 664.7 276.9 C672.1 281.4 674.9 283.2 681.9 285.5 C688.8 287.8 699.5 289.0 703.4 289.8" fill="none" stroke="#fbecec" stroke-width="4.1" stroke-linejoin="round" stroke-linecap="butt"/>
<path d="M331.7 746.8 C333.7 749.5 338.2 757.2 342.9 761.8 C347.6 766.5 352.5 769.9 357.9 772.6 C363.3 775.3 368.7 776.2 372.9 776.9 C377.2 777.5 373.8 779.5 381.5 776.2 C389.2 772.9 399.0 766.7 415.8 758.6 C432.6 750.5 464.2 736.1 474.8 731.2" fill="none" stroke="#f7f0dc" stroke-width="3.0" stroke-linejoin="round" stroke-linecap="round"/>
<path d="M688.1 695.8 C690.1 693.1 693.1 685.0 698.9 680.8 C704.7 676.5 714.1 675.5 720.3 672.2 C726.5 668.9 729.3 666.0 733.2 662.5 C737.1 659.1 740.2 654.6 741.8 652.9" fill="none" stroke="#f0ecf4" stroke-width="2.8" stroke-linejoin="round" stroke-linecap="round"/>
<path d="M737.5 909.3 C748.3 910.1 785.2 911.8 797.6 913.6 C809.9 915.3 801.5 915.7 806.1 918.9 C810.8 922.2 820.2 929.5 823.3 931.8" fill="none" stroke="#f0ecf4" stroke-width="2.8" stroke-linejoin="round" stroke-linecap="round"/>
<path d="M910.2 921.7 C916.0 924.4 930.8 930.5 942.4 936.7 C954.0 942.9 961.8 948.7 974.6 956.0 C987.3 963.4 1006.2 973.6 1013.2 977.5" fill="none" stroke="#f0ecf4" stroke-width="2.8" stroke-linejoin="round" stroke-linecap="round"/>
<path d="M1000.3 919.5 L1016.4 928.1" fill="none" stroke="#f0ecf4" stroke-width="2.8" stroke-linejoin="round" stroke-linecap="round"/>
<path d="M1022.8 1007.5 C1023.4 1006.2 1025.7 999.0 1026.1 1000.0 C1026.5 1001.0 1025.6 1004.8 1025.0 1012.9 C1024.4 1021.0 1021.9 1037.9 1022.8 1045.1 C1023.8 1052.2 1027.5 1051.2 1030.4 1052.6 C1033.3 1053.9 1035.3 1053.3 1038.9 1052.6 C1042.6 1051.8 1049.6 1046.9 1050.7 1048.3 C1051.9 1049.6 1050.2 1052.5 1045.4 1060.1 C1040.5 1067.6 1028.9 1080.8 1023.9 1090.1 C1018.9 1099.4 1021.7 1101.5 1017.5 1111.6 C1013.2 1121.6 1008.0 1133.2 1000.3 1145.9 C992.6 1158.7 983.1 1172.0 974.6 1182.4 C966.1 1192.8 956.6 1196.1 953.1 1203.8 C949.6 1211.6 954.5 1218.8 955.3 1225.3 C956.0 1231.8 954.5 1233.5 957.2 1240.0 C959.9 1246.5 962.2 1251.8 970.4 1261.2 C978.5 1270.7 990.3 1281.1 1002.7 1292.6 C1015.1 1304.1 1030.0 1316.3 1039.1 1325.0 C1048.2 1333.6 1050.7 1337.9 1053.3 1340.7" fill="none" stroke="#e6e1d0" stroke-width="1.7" stroke-linejoin="round" stroke-linecap="round"/>
<path d="M737.7 908.8 C741.7 909.2 756.0 910.6 760.0 911.0 C764.0 911.4 753.0 910.4 760.0 911.0 C767.0 911.5 787.8 910.5 798.6 914.2 C809.4 917.9 812.5 920.7 820.1 931.4 C827.6 942.0 837.8 963.0 840.5 973.2 C843.2 983.4 837.2 983.4 835.1 988.2 C833.0 993.0 833.3 993.2 828.7 1000.0 C824.0 1006.8 817.1 1014.9 809.4 1025.7 C801.6 1036.6 793.1 1048.1 785.7 1060.1 C778.4 1072.1 772.6 1083.8 768.6 1092.3 C764.5 1100.8 764.4 1099.9 763.2 1107.3 C762.1 1114.6 762.7 1125.3 762.1 1133.0 C761.6 1140.8 761.7 1144.8 760.0 1150.2 C758.3 1155.6 753.8 1156.9 752.7 1163.1 C751.6 1169.3 752.5 1179.5 753.8 1184.5 C755.1 1189.6 758.9 1189.4 760.0 1191.0 C761.1 1192.5 758.5 1190.4 760.0 1193.1 C761.5 1195.8 765.9 1199.0 768.6 1206.0 C771.3 1212.9 773.9 1227.1 775.0 1231.7" fill="none" stroke="#e6e1d0" stroke-width="1.7" stroke-linejoin="round" stroke-linecap="round"/>
<path d="M634.7 1090.1 C633.7 1094.0 630.3 1104.6 629.3 1111.6 C628.4 1118.5 627.4 1121.0 629.3 1128.7 C631.3 1136.5 639.1 1146.8 640.1 1154.5 C641.0 1162.2 639.9 1158.9 634.7 1171.7 C629.5 1184.4 616.1 1210.8 611.1 1225.3 C606.1 1239.8 607.3 1244.8 607.1 1252.1 C606.9 1259.5 606.7 1253.6 610.1 1266.3 C613.6 1279.0 622.3 1309.5 626.3 1322.9 C630.3 1336.3 631.3 1337.5 632.4 1340.7" fill="none" stroke="#fbecec" stroke-width="4.1" stroke-linejoin="round" stroke-linecap="butt"/>
<path d="M626.3 1322.9 C629.8 1323.7 638.8 1326.1 645.5 1327.0 C652.3 1327.9 657.2 1328.3 663.7 1328.0 C670.3 1327.6 675.8 1327.3 681.9 1325.0 C688.1 1322.6 692.3 1320.3 698.1 1314.8 C703.9 1309.4 709.6 1300.3 714.3 1294.6 C719.0 1289.0 719.3 1287.1 724.4 1283.5 C729.5 1279.8 737.5 1277.5 742.6 1274.4 C747.7 1271.3 749.6 1269.2 752.7 1266.3 C755.9 1263.4 756.9 1262.9 760.0 1258.2 C763.1 1253.5 767.4 1244.6 770.1 1240.0 C772.8 1235.4 770.7 1235.1 775.0 1232.8 C779.4 1230.5 790.9 1228.4 794.3 1227.4" fill="none" stroke="#fbecec" stroke-width="4.1" stroke-linejoin="round" stroke-linecap="butt"/>
<path d="M742.6 1274.4 C744.4 1276.6 749.6 1284.0 752.7 1286.5 C755.9 1289.1 755.8 1287.1 760.0 1288.5 C764.2 1290.0 770.4 1292.1 776.2 1294.6 C782.0 1297.2 786.9 1297.6 792.4 1302.7 C797.8 1307.8 801.8 1316.1 806.5 1322.9 C811.3 1329.8 816.5 1337.5 818.7 1340.7" fill="none" stroke="#fbecec" stroke-width="4.1" stroke-linejoin="round" stroke-linecap="butt"/>
<path d="M832.8 1272.4 C835.7 1271.5 843.2 1268.4 849.0 1267.3 C854.8 1266.2 859.4 1266.1 865.2 1266.3 C871.0 1266.5 871.2 1264.3 881.4 1268.3 C891.6 1272.3 910.5 1282.7 921.8 1288.5 C933.1 1294.4 937.5 1296.7 944.1 1300.7 C950.6 1304.7 954.2 1306.8 958.2 1310.8 C962.2 1314.8 964.9 1318.9 966.3 1322.9 C967.8 1326.9 967.6 1329.8 966.3 1333.0 C965.0 1336.2 960.5 1339.3 959.2 1340.7" fill="none" stroke="#fbecec" stroke-width="4.1" stroke-linejoin="round" stroke-linecap="butt"/>
<path d="M1183.8 308.1 L1188.1 293.0" fill="none" stroke="#fbecec" stroke-width="4.1" stroke-linejoin="round" stroke-linecap="butt"/>
<path d="M1157.0 297.3 C1159.1 299.6 1164.9 305.2 1168.8 310.2 C1172.6 315.2 1174.8 319.0 1178.4 325.2 C1182.0 331.4 1186.9 341.1 1188.7 344.5" fill="none" stroke="#eff162" stroke-width="6.4" stroke-linejoin="round" stroke-linecap="butt"/>
<path d="M1066.8 167.5 C1067.6 171.2 1069.2 179.2 1071.1 187.9 C1073.1 196.6 1074.5 206.5 1077.6 215.8 C1080.7 225.1 1082.9 230.9 1088.3 239.4 C1093.7 247.9 1099.1 255.3 1107.6 263.0 C1116.1 270.7 1124.7 275.2 1135.5 282.3 C1146.3 289.4 1158.2 297.5 1167.7 302.7 C1177.1 307.9 1184.4 309.7 1188.1 311.3" fill="none" stroke="#e99a45" stroke-width="6.8" stroke-linejoin="round" stroke-linecap="butt"/>
<path d="M1066.8 167.5 C1067.6 171.2 1069.2 179.2 1071.1 187.9 C1073.1 196.6 1074.5 206.5 1077.6 215.8 C1080.7 225.1 1082.9 230.9 1088.3 239.4 C1093.7 247.9 1099.1 255.3 1107.6 263.0 C1116.1 270.7 1124.7 275.2 1135.5 282.3 C1146.3 289.4 1158.2 297.5 1167.7 302.7 C1177.1 307.9 1184.4 309.7 1188.1 311.3" fill="none" stroke="#d98838" stroke-width="4.6" stroke-linejoin="round" stroke-linecap="butt" stroke-dasharray="0.9 2.3"/>
<path d="M1066.8 167.5 C1067.6 171.2 1069.2 179.2 1071.1 187.9 C1073.1 196.6 1074.5 206.5 1077.6 215.8 C1080.7 225.1 1082.9 230.9 1088.3 239.4 C1093.7 247.9 1099.1 255.3 1107.6 263.0 C1116.1 270.7 1124.7 275.2 1135.5 282.3 C1146.3 289.4 1158.2 297.5 1167.7 302.7 C1177.1 307.9 1184.4 309.7 1188.1 311.3" fill="none" stroke="#e99a45" stroke-width="1.6" stroke-linejoin="round" stroke-linecap="butt"/>
<path d="M883.4 167.5 C879.7 173.9 870.3 189.0 863.0 202.9 C855.7 216.8 847.6 234.7 842.6 244.8 C837.6 254.8 838.8 254.1 835.1 258.7 C831.4 263.3 828.0 267.6 822.2 270.5 C816.4 273.4 810.6 274.2 802.9 274.8 C795.2 275.4 787.0 274.2 779.3 273.7 C771.6 273.2 766.7 272.2 760.0 272.0 C753.3 271.8 747.9 271.8 742.0 272.6 C736.0 273.5 732.0 275.0 727.0 276.9 C721.9 278.9 718.3 280.5 714.1 283.4 C709.8 286.3 706.8 288.6 703.4 293.0 C699.9 297.5 698.2 301.1 694.8 308.1 C691.3 315.0 687.9 323.5 684.0 331.7 C680.2 339.8 676.8 343.5 673.3 353.1 C669.8 362.8 667.8 372.9 664.7 385.3 C661.6 397.7 659.0 408.3 656.1 421.8 C653.2 435.2 650.6 450.5 648.6 460.0 C646.7 469.4 647.2 462.9 645.4 474.3 C643.7 485.8 640.7 510.6 639.0 523.7 C637.2 536.8 636.3 539.2 635.8 547.3 C635.2 555.4 635.2 559.5 635.8 568.7 C636.3 578.0 637.2 589.5 639.0 598.8 C640.7 608.1 641.9 610.2 645.4 620.2 C648.9 630.3 653.7 644.1 658.3 654.6 C662.9 665.0 666.2 670.4 671.2 678.2 C676.2 686.0 683.3 694.4 686.0 697.9" fill="none" stroke="#f9f46a" stroke-width="5.1" stroke-linejoin="round" stroke-linecap="butt"/>
<path d="M681.7 692.6 C682.5 693.5 679.8 691.2 686.0 697.9 C692.2 704.7 705.2 718.1 716.0 730.1 C726.8 742.1 739.9 753.6 746.1 764.5 C752.2 775.3 750.0 780.9 750.4 790.2 C750.7 799.5 749.0 807.4 748.2 815.9 C747.4 824.4 748.0 832.6 746.1 837.4 C744.1 842.2 739.6 839.7 737.5 842.8 C735.4 845.9 734.3 848.6 734.3 854.6 C734.3 860.6 736.3 869.1 737.5 876.0 C738.6 883.0 740.7 887.4 740.7 893.2 C740.7 899.0 740.0 902.4 737.5 908.2 C735.0 914.0 731.4 919.7 726.8 925.4 C722.1 931.1 716.7 934.5 711.7 940.0 C706.7 945.5 703.7 945.2 699.1 956.0 C694.5 966.8 690.8 987.8 686.2 1000.0 C681.6 1012.2 675.6 1019.4 673.3 1023.6" fill="none" stroke="#f9f46a" stroke-width="6.3" stroke-linejoin="round" stroke-linecap="butt"/>
<path d="M675.5 1019.3 C673.5 1022.8 672.1 1025.9 664.7 1038.6 C657.4 1051.4 644.7 1075.6 634.7 1090.1 C624.6 1104.6 615.5 1112.9 608.9 1119.1 C602.4 1125.3 622.2 1112.3 598.2 1124.5 C574.3 1136.6 500.2 1173.9 475.9 1186.7 C451.6 1199.4 466.1 1191.8 463.0 1195.3 C459.9 1198.7 459.3 1200.6 458.7 1206.0 C458.2 1211.4 458.2 1212.3 459.8 1225.3 C461.5 1238.3 466.6 1266.7 467.9 1278.4 C469.3 1290.2 468.5 1285.5 467.5 1290.6 C466.6 1295.7 465.4 1299.8 462.5 1306.7 C459.6 1313.7 454.6 1322.9 451.4 1329.0 C448.1 1335.1 445.6 1338.6 444.3 1340.7" fill="none" stroke="#f9f46a" stroke-width="5.1" stroke-linejoin="round" stroke-linecap="butt"/>
<path d="M331.7 914.2 C333.7 915.2 335.5 916.3 342.9 919.5 C350.3 922.8 361.7 928.9 372.9 932.4 C384.1 935.9 395.8 938.1 405.1 938.9 C414.4 939.6 417.1 938.5 424.4 936.7 C431.7 935.0 437.8 933.1 445.9 929.2 C454.0 925.3 461.4 920.1 469.5 915.3 C477.6 910.4 485.1 906.2 490.9 902.4 C496.7 898.6 499.7 895.7 501.7 894.2" fill="none" stroke="#f9f46a" stroke-width="5.1" stroke-linejoin="round" stroke-linecap="butt"/>
<path d="M495.2 899.2 C498.3 896.7 505.0 891.6 512.4 885.2 C519.7 878.8 527.1 873.8 536.0 863.8 C544.9 853.7 553.2 838.3 561.7 829.4 C570.2 820.5 574.7 819.2 583.2 814.4 C591.7 809.6 598.5 806.5 608.9 802.6 C619.4 798.7 631.1 795.7 641.1 793.0 C651.2 790.2 659.3 787.8 664.7 787.6 C670.1 787.4 658.1 782.3 671.2 791.9 C684.3 801.4 725.5 831.8 737.5 840.6" fill="none" stroke="#f9f46a" stroke-width="6.3" stroke-linejoin="round" stroke-linecap="butt"/>
<path d="M737.5 840.6 C745.2 840.0 766.5 838.3 780.4 837.4 C794.3 836.5 805.3 835.2 814.7 835.7 C824.2 836.2 825.0 836.3 833.0 840.2 C840.9 844.1 846.3 850.2 858.7 857.3 C871.1 864.5 892.3 874.1 901.6 879.9 C910.9 885.6 908.5 884.7 910.2 889.5 C911.9 894.3 913.2 895.5 911.3 906.7 C909.3 917.9 905.1 937.1 899.5 951.7 C893.9 966.4 884.8 979.5 880.2 988.2 C875.5 996.9 878.7 990.2 873.7 1000.0 C868.7 1009.8 859.2 1028.2 852.3 1042.9 C845.3 1057.6 839.7 1069.9 835.1 1081.5 C830.5 1093.1 830.4 1098.0 826.5 1107.3 C822.7 1116.6 819.8 1122.6 813.6 1133.0 C807.5 1143.5 797.2 1156.3 792.2 1165.2 C787.2 1174.1 786.7 1176.6 785.7 1182.4 C784.8 1188.2 786.6 1194.7 786.8 1197.4" fill="none" stroke="#f9f46a" stroke-width="6.3" stroke-linejoin="round" stroke-linecap="butt"/>
<path d="M786.0 1188.8 C786.1 1190.4 784.9 1191.2 786.8 1197.4 C788.7 1203.6 793.7 1215.5 796.5 1223.2 C799.3 1230.8 796.3 1230.8 802.5 1240.0 C808.7 1249.2 820.2 1263.1 830.8 1274.4 C841.4 1285.7 850.6 1293.2 861.1 1302.7 C871.7 1312.2 881.1 1320.1 889.4 1327.0 C897.8 1333.8 904.4 1338.3 907.7 1340.7" fill="none" stroke="#f3f562" stroke-width="5.9" stroke-linejoin="round" stroke-linecap="butt"/>
<text x="386.0" y="278.0" transform="rotate(-7 386.0 278.0)" style="font-family:'Liberation Sans',sans-serif;font-size:13px;" fill="#111" stroke="#fff" stroke-width="3" paint-order="stroke" stroke-linejoin="round">veg</text>
<text x="421.0" y="944.0" transform="rotate(-14 421.0 944.0)" style="font-family:'Liberation Serif','DejaVu Serif',serif;font-size:14.4px;" fill="#111" stroke="#fff" stroke-width="3" paint-order="stroke" stroke-linejoin="round">dorf</text>
<text x="921.5" y="1293.0" transform="rotate(22 921.5 1293.0)" style="font-family:'Liberation Sans',sans-serif;font-size:13.5px;" fill="#111" stroke="#fff" stroke-width="3" paint-order="stroke" stroke-linejoin="round">weg</text>
<polygon points="821.5,532.2 886.4,538.6 948.7,557.5 1006.2,588.2 1056.6,629.6 1098.0,680.0 1128.7,737.5 1147.6,799.8 1154.0,864.7 1147.6,929.6 1128.7,991.9 1098.0,1049.4 1056.6,1099.8 1006.2,1141.2 948.7,1171.9 886.4,1190.8 821.5,1197.2 756.6,1190.8 694.3,1171.9 636.8,1141.2 586.4,1099.8 545.0,1049.4 514.3,991.9 495.4,929.6 489.0,864.7 495.4,799.8 514.3,737.5 545.0,680.0 586.4,629.6 636.8,588.2 694.3,557.5 756.6,538.6" fill="rgba(150,149,245,0.38)" stroke="none"/>
<text x="711.0" y="825.5" transform="rotate(36 711.0 825.5)" style="font-family:'Liberation Serif','DejaVu Serif',serif;font-size:14.2px;" fill="#2b2b55" stroke="#e4e2f8" stroke-width="3" paint-order="stroke" stroke-linejoin="round">dorf</text>
<text x="975.0" y="904.5" transform="rotate(36 975.0 904.5)" style="font-family:'Liberation Sans',sans-serif;font-size:13.5px;" fill="#2b2b55" stroke="#e0def8" stroke-width="2.5" paint-order="stroke" stroke-linejoin="round">weg</text>
<text x="1014.0" y="983.0" transform="rotate(80 1014.0 983.0)" style="font-family:'Liberation Sans',sans-serif;font-size:13.5px;" fill="#2b2b55" stroke="#e0def8" stroke-width="2.5" paint-order="stroke" stroke-linejoin="round">Weg</text>
<text x="826.3" y="1132.0" transform="rotate(-76 826.3 1132.0)" style="font-family:'Liberation Serif','DejaVu Serif',serif;font-size:14.2px;" fill="#2b2b55" stroke="#e0def8" stroke-width="2.5" paint-order="stroke" stroke-linejoin="round">dorf</text>
<path d="M332.1 291.3 L357.9 286.6 L385.4 279.3" fill="none" stroke="#f6f9e8" stroke-width="22" stroke-linecap="butt" filter="url(#bl2)"/>
<path d="M332.1 291.3 L357.9 286.6 L385.4 279.3" fill="none" stroke="#b3b3af" stroke-width="12" stroke-linecap="butt" filter="url(#bl)"/>
<path d="M538.6 190.0 L551.0 215.8 L563.9 242.6" fill="none" stroke="#fdfcf2" stroke-width="18" stroke-linecap="butt" filter="url(#bl2)"/>
<path d="M538.6 190.0 L551.0 215.8 L563.9 242.6" fill="none" stroke="#b3b3af" stroke-width="8" stroke-linecap="butt" filter="url(#bl)"/>
<path d="M692.6 305.9 L685.1 327.4 L678.0 346.7" fill="none" stroke="#e6e8da" stroke-width="17" stroke-linecap="butt" filter="url(#bl2)"/>
<path d="M692.6 305.9 L685.1 327.4 L678.0 346.7" fill="none" stroke="#b3b3af" stroke-width="7" stroke-linecap="butt" filter="url(#bl)"/>
<path d="M781.5 273.3 L813.6 274.8 L830.8 265.1 L844.1 248.4" fill="none" stroke="#efe6dc" stroke-width="19" stroke-linecap="butt" filter="url(#bl2)"/>
<path d="M781.5 273.3 L813.6 274.8 L830.8 265.1 L844.1 248.4" fill="none" stroke="#b3b3af" stroke-width="9" stroke-linecap="butt" filter="url(#bl)"/>
<path d="M644.8 476.9 L641.6 500.1 L638.6 521.5" fill="none" stroke="#dfe8d8" stroke-width="17" stroke-linecap="butt" filter="url(#bl2)"/>
<path d="M644.8 476.9 L641.6 500.1 L638.6 521.5" fill="none" stroke="#b3b3af" stroke-width="7" stroke-linecap="butt" filter="url(#bl)"/>
<path d="M683.8 700.1 L716.0 732.3 L748.2 765.5" fill="none" stroke="#c6c2de" stroke-width="19" stroke-linecap="butt" filter="url(#bl2)"/>
<path d="M683.8 700.1 L716.0 732.3 L748.2 765.5" fill="none" stroke="#a6a6ca" stroke-width="9" stroke-linecap="butt" filter="url(#bl)"/>
<path d="M669.9 790.2 L690.3 805.2 L710.7 821.3" fill="none" stroke="#cfc8e2" stroke-width="17" stroke-linecap="butt" filter="url(#bl2)"/>
<path d="M669.9 790.2 L690.3 805.2 L710.7 821.3" fill="none" stroke="#a6a6ca" stroke-width="7" stroke-linecap="butt" filter="url(#bl)"/>
<path d="M345.0 918.5 L372.9 931.4 L400.8 938.9 L419.0 939.3" fill="none" stroke="#eef3e4" stroke-width="19" stroke-linecap="butt" filter="url(#bl2)"/>
<path d="M345.0 918.5 L372.9 931.4 L400.8 938.9 L419.0 939.3" fill="none" stroke="#b3b3af" stroke-width="9" stroke-linecap="butt" filter="url(#bl)"/>
<path d="M916.6 886.3 L946.7 893.8 L975.6 903.5" fill="none" stroke="#cfc6e2" stroke-width="17" stroke-linecap="butt" filter="url(#bl2)"/>
<path d="M916.6 886.3 L946.7 893.8 L975.6 903.5" fill="none" stroke="#a6a6ca" stroke-width="7" stroke-linecap="butt" filter="url(#bl)"/>
<path d="M943.5 935.6 L976.7 956.0 L1012.1 979.6" fill="none" stroke="#d4d2f0" stroke-width="18" stroke-linecap="butt" filter="url(#bl2)"/>
<path d="M943.5 935.6 L976.7 956.0 L1012.1 979.6" fill="none" stroke="#a6a6ca" stroke-width="8" stroke-linecap="butt" filter="url(#bl)"/>
<path d="M821.2 932.9 L833.0 951.7 L841.1 971.0" fill="none" stroke="#cfc6e2" stroke-width="17" stroke-linecap="butt" filter="url(#bl2)"/>
<path d="M821.2 932.9 L833.0 951.7 L841.1 971.0" fill="none" stroke="#a6a6ca" stroke-width="7" stroke-linecap="butt" filter="url(#bl)"/>
<path d="M665.8 1041.8 L649.7 1064.4 L635.8 1088.0" fill="none" stroke="#c0cae6" stroke-width="18" stroke-linecap="butt" filter="url(#bl2)"/>
<path d="M665.8 1041.8 L649.7 1064.4 L635.8 1088.0" fill="none" stroke="#a6a6ca" stroke-width="8" stroke-linecap="butt" filter="url(#bl)"/>
<path d="M458.3 1226.4 L463.0 1251.0 L467.8 1276.8" fill="none" stroke="#f6f5e6" stroke-width="17" stroke-linecap="butt" filter="url(#bl2)"/>
<path d="M458.3 1226.4 L463.0 1251.0 L467.8 1276.8" fill="none" stroke="#b3b3af" stroke-width="7" stroke-linecap="butt" filter="url(#bl)"/>
<path d="M609.7 1267.3 L617.2 1292.6 L627.9 1320.9" fill="none" stroke="#e4ede0" stroke-width="18" stroke-linecap="butt" filter="url(#bl2)"/>
<path d="M609.7 1267.3 L617.2 1292.6 L627.9 1320.9" fill="none" stroke="#b3b3af" stroke-width="8" stroke-linecap="butt" filter="url(#bl)"/>
<path d="M819.0 1131.3 L802.9 1152.3 L789.0 1171.0" fill="none" stroke="#c6cdea" stroke-width="17" stroke-linecap="butt" filter="url(#bl2)"/>
<path d="M819.0 1131.3 L802.9 1152.3 L789.0 1171.0" fill="none" stroke="#a6a6ca" stroke-width="7" stroke-linecap="butt" filter="url(#bl)"/>
<path d="M882.4 1267.7 L901.6 1278.4 L920.8 1289.2" fill="none" stroke="#eee8dc" stroke-width="19" stroke-linecap="butt" filter="url(#bl2)"/>
<path d="M882.4 1267.7 L901.6 1278.4 L920.8 1289.2" fill="none" stroke="#b3b3af" stroke-width="9" stroke-linecap="butt" filter="url(#bl)"/>
<polygon points="519.7,715.1 533.6,712.5 546.5,730.1 624.8,676.0 628.1,686.1 643.1,710.8 660.2,740.8 637.7,717.2 557.2,740.8 553.0,755.9 522.9,746.2 520.8,734.4" fill="#84cff6" stroke="#55c8fb" stroke-width="0.8"/>
<polygon points="737.5,732.3 752.5,716.2 799.7,710.4 842.6,735.5 843.7,743.0 840.5,767.7 780.4,752.6 779.3,761.2 750.4,755.9 737.5,747.3" fill="#8acff9" stroke="#55c8fb" stroke-width="0.8"/>
<polygon points="557.2,740.8 637.7,717.2 660.2,740.8 675.3,735.5 692.4,713.0 716.0,725.8 737.5,747.3 748.2,760.2 746.1,766.6 664.5,787.0 637.7,789.1 617.3,767.7 553.0,755.9" fill="#60ccfc" stroke="#55c8fb" stroke-width="0.8"/>
<polygon points="589.4,804.1 664.5,785.9 666.7,788.1 591.6,805.2" fill="#60ccfc" stroke="#55c8fb" stroke-width="0.8"/>
<polygon points="707.4,773.0 721.4,768.7 722.5,777.3 718.2,789.1 708.5,787.0" fill="#8dd0f5" stroke="none" stroke-width="0.8"/>
<polygon points="517.5,716.2 522.9,715.5 523.6,723.3 518.6,724.1" fill="#84cff6" stroke="#55c8fb" stroke-width="0.8"/>
<circle cx="810.4" cy="847.1" r="7.4" fill="#8ccbf2"/>
<path d="M683.8 700.1 L716.0 732.3 L748.2 764.5" fill="none" stroke="#a2a2c8" stroke-width="9" filter="url(#bl)"/>
<polygon points="821.5,532.2 886.4,538.6 948.7,557.5 1006.2,588.2 1056.6,629.6 1098.0,680.0 1128.7,737.5 1147.6,799.8 1154.0,864.7 1147.6,929.6 1128.7,991.9 1098.0,1049.4 1056.6,1099.8 1006.2,1141.2 948.7,1171.9 886.4,1190.8 821.5,1197.2 756.6,1190.8 694.3,1171.9 636.8,1141.2 586.4,1099.8 545.0,1049.4 514.3,991.9 495.4,929.6 489.0,864.7 495.4,799.8 514.3,737.5 545.0,680.0 586.4,629.6 636.8,588.2 694.3,557.5 756.6,538.6" fill="none" stroke="#9090f8" stroke-width="3" stroke-linejoin="round"/>
<polygon points="1593.4,1296 1924,1296 1924,1342 1619,1342" fill="#fff"/>
<path d="M1592.6 1298 L1619 1341.5" stroke="#8a8a8a" stroke-width="2" fill="none"/>
<text x="1842.5" y="1321" text-anchor="middle" style="font-family:'Liberation Sans',sans-serif;font-size:14.500px;letter-spacing:0.900px" fill="#2e9be0">100 m</text>
<rect x="1810.5" y="1326.5" width="65" height="5" fill="#cfe9fb" stroke="#2e9be0" stroke-width="1"/>
<rect x="1811" y="1327" width="16" height="4" fill="#3aa4e6"/><rect x="1843" y="1327" width="16" height="4" fill="#3aa4e6"/>
</g></svg>
<svg style="left:0;top:1085px" width="332" height="40" viewBox="0 1085 332 40">
<rect class="ic" style="stroke-width:1.800" x="13.0" y="1093.0" width="10.400" height="10.400" rx="2.800"/><rect class="blf" x="16.0" y="1096.1" width="4.400" height="4.200"/><rect class="ic" style="stroke-width:1.800" x="25.3" y="1105.3" width="10.400" height="10.400" rx="2.800"/><rect class="blf" x="28.3" y="1108.5" width="4.400" height="4.200"/>
<rect class="ic" style="stroke-width:1.800" x="49.9" y="1093.0" width="10.400" height="10.400" rx="2.800"/><rect class="blf" x="52.9" y="1096.1" width="4.400" height="4.200"/><rect class="ic" style="stroke-width:1.800" x="62.5" y="1105.4" width="10.400" height="10.400" rx="2.800"/><path class="ic" d="M63.800 1096.300 L70.100 1096.300 L70.100 1101.800"/>
<rect class="ic" style="stroke-width:1.800" x="87.0" y="1093.0" width="10.400" height="10.400" rx="2.800"/><rect class="ic" style="stroke-width:1.800" x="99.5" y="1105.4" width="10.400" height="10.400" rx="2.800"/>
<path class="ic" d="M129.2 1098.8 A8.2 8.2 0 0 1 143.4 1105.6 M138.6 1102.3 L143.4 1106.0 L147.3 1101.7"/><path class="ic" d="M141.5 1110.1 A8.2 8.2 0 0 1 127.5 1103.3 M123.6 1107.3 L127.5 1102.9 L132.5 1106.2"/>
<path class="ic" d="M175.5 1112.7 A8.3 8.3 0 1 0 166.1 1105.5 L167.7 1109.4 M162.3 1106.2 L167.7 1109.5 L171.0 1104.6"/>
<path class="ic" style="stroke-width:1.800" d="M199.300 1096.500 L201.300 1114.300 Q209.500 1118.800 217.700 1114.300 L219.700 1096.500"/><ellipse class="ic" style="stroke-width:1.800" cx="209.500" cy="1096" rx="10.200" ry="3.300"/><path class="ic bl" style="stroke-width:2.100" d="M205.600 1103.500 L213.500 1111 M213.500 1103.500 L205.600 1111"/>
<path class="ic" style="stroke-width:1.700" d="M263.500 1115 L263.500 1092.600 L278.500 1099.600 L263.700 1105.500"/><circle cx="263.500" cy="1115.300" r="1.900" fill="#787878"/>
<path class="ic" style="stroke-width:1.700" d="M295.300 1107 Q300.500 1099.600 307.300 1099.500 Q314.500 1099.800 319.500 1108.400 Q313.500 1114.800 307.300 1114.800 Q300.500 1114.500 295.300 1107 Z"/><circle class="ic" style="stroke-width:1.700" cx="307.300" cy="1107" r="4.300"/><circle class="blf" cx="307.100" cy="1107.200" r="2"/><path class="ic" style="stroke-width:1.500" d="M307.100 1094.100 L307.100 1096.400 M298.600 1096.200 L301 1098.300 M315.600 1096.200 L313.500 1098.300"/>
</svg>
<svg style="left:30px;top:1122px" width="276" height="268" viewBox="30 1122 276 268">
<defs><filter id="ob" x="-5%" y="-5%" width="110%" height="110%"><feGaussianBlur stdDeviation="2.600"/></filter><filter id="ob2" x="-5%" y="-5%" width="110%" height="110%"><feGaussianBlur stdDeviation="2.500"/></filter><clipPath id="oc"><rect x="33" y="1124" width="266" height="264"/></clipPath></defs>
<g clip-path="url(#oc)"><g filter="url(#ob)">
<rect x="36" y="1127" width="259" height="260" fill="#f0f1ec"/>
<rect x="250" y="1150" width="45" height="237" fill="#e6f0e0"/>
<rect x="36" y="1127" width="60" height="110" fill="#e9e9e7"/>
<path d="M39.1 1149.2 L81.9 1149.2" fill="none" stroke="#a9a9a9" stroke-width="4.5" stroke-opacity="0.8" stroke-linecap="round" stroke-linejoin="round"/>
<path d="M107.1 1133.6 L149.9 1133.6" fill="none" stroke="#a9a9a9" stroke-width="4.5" stroke-opacity="0.8" stroke-linecap="round" stroke-linejoin="round"/>
<path d="M161.6 1128.8 L210.2 1128.8" fill="none" stroke="#a9a9a9" stroke-width="4.5" stroke-opacity="0.8" stroke-linecap="round" stroke-linejoin="round"/>
<path d="M229.7 1141.4 L268.6 1141.4" fill="none" stroke="#a9a9a9" stroke-width="4.5" stroke-opacity="0.8" stroke-linecap="round" stroke-linejoin="round"/>
<path d="M64.4 1215.3 L103.3 1215.3" fill="none" stroke="#a9a9a9" stroke-width="4.5" stroke-opacity="0.8" stroke-linecap="round" stroke-linejoin="round"/>
<path d="M39.1 1246.4 L68.2 1246.4" fill="none" stroke="#a9a9a9" stroke-width="4.5" stroke-opacity="0.8" stroke-linecap="round" stroke-linejoin="round"/>
<path d="M132.4 1226.0 L163.6 1226.0" fill="none" stroke="#a9a9a9" stroke-width="4.5" stroke-opacity="0.8" stroke-linecap="round" stroke-linejoin="round"/>
<path d="M169.4 1226.0 L202.5 1226.0" fill="none" stroke="#a9a9a9" stroke-width="4.5" stroke-opacity="0.8" stroke-linecap="round" stroke-linejoin="round"/>
<path d="M220.0 1234.8 L272.5 1234.8" fill="none" stroke="#a9a9a9" stroke-width="4.5" stroke-opacity="0.8" stroke-linecap="round" stroke-linejoin="round"/>
<path d="M239.4 1190.0 L274.4 1190.0" fill="none" stroke="#a9a9a9" stroke-width="4.5" stroke-opacity="0.8" stroke-linecap="round" stroke-linejoin="round"/>
<path d="M264.7 1262.0 L291.9 1262.0" fill="none" stroke="#a9a9a9" stroke-width="4.5" stroke-opacity="0.8" stroke-linecap="round" stroke-linejoin="round"/>
<path d="M245.3 1281.4 L280.3 1281.4" fill="none" stroke="#a9a9a9" stroke-width="4.5" stroke-opacity="0.8" stroke-linecap="round" stroke-linejoin="round"/>
<path d="M39.1 1300.9 L58.5 1300.9" fill="none" stroke="#a9a9a9" stroke-width="4.5" stroke-opacity="0.8" stroke-linecap="round" stroke-linejoin="round"/>
<path d="M79.9 1291.2 L118.8 1291.2" fill="none" stroke="#a9a9a9" stroke-width="4.5" stroke-opacity="0.8" stroke-linecap="round" stroke-linejoin="round"/>
<path d="M142.2 1312.6 L165.5 1312.6" fill="none" stroke="#a9a9a9" stroke-width="4.5" stroke-opacity="0.8" stroke-linecap="round" stroke-linejoin="round"/>
<path d="M264.7 1320.4 L293.9 1320.4" fill="none" stroke="#a9a9a9" stroke-width="4.5" stroke-opacity="0.8" stroke-linecap="round" stroke-linejoin="round"/>
<path d="M264.7 1332.0 L290.0 1332.0" fill="none" stroke="#a9a9a9" stroke-width="4.5" stroke-opacity="0.8" stroke-linecap="round" stroke-linejoin="round"/>
<path d="M70.2 1341.7 L109.1 1341.7" fill="none" stroke="#a9a9a9" stroke-width="4.5" stroke-opacity="0.8" stroke-linecap="round" stroke-linejoin="round"/>
<path d="M159.7 1334.0 L204.4 1334.0" fill="none" stroke="#a9a9a9" stroke-width="4.5" stroke-opacity="0.8" stroke-linecap="round" stroke-linejoin="round"/>
<path d="M99.4 1376.8 L134.4 1376.8" fill="none" stroke="#a9a9a9" stroke-width="4.5" stroke-opacity="0.8" stroke-linecap="round" stroke-linejoin="round"/>
<path d="M181.1 1351.5 L198.6 1351.5" fill="none" stroke="#a9a9a9" stroke-width="4.5" stroke-opacity="0.8" stroke-linecap="round" stroke-linejoin="round"/>
<path d="M181.1 1316.5 L200.5 1316.5" fill="none" stroke="#a9a9a9" stroke-width="4.5" stroke-opacity="0.8" stroke-linecap="round" stroke-linejoin="round"/>
<path d="M249.1 1303.8 L288.0 1303.8" fill="none" stroke="#a9a9a9" stroke-width="4.5" stroke-opacity="0.8" stroke-linecap="round" stroke-linejoin="round"/>
<path d="M44.9 1166.7 L103.3 1166.7" fill="none" stroke="#d9d9d6" stroke-width="9" stroke-opacity="0.7" stroke-linecap="round" stroke-linejoin="round"/>
<path d="M41.0 1201.7 L89.6 1201.7" fill="none" stroke="#d9d9d6" stroke-width="9" stroke-opacity="0.7" stroke-linecap="round" stroke-linejoin="round"/>
<path d="M142.2 1149.2 L181.1 1149.2" fill="none" stroke="#d9d9d6" stroke-width="9" stroke-opacity="0.7" stroke-linecap="round" stroke-linejoin="round"/>
<path d="M220.0 1158.9 L278.3 1158.9" fill="none" stroke="#d9d9d6" stroke-width="9" stroke-opacity="0.7" stroke-linecap="round" stroke-linejoin="round"/>
<path d="M229.7 1213.4 L288.0 1213.4" fill="none" stroke="#d9d9d6" stroke-width="9" stroke-opacity="0.7" stroke-linecap="round" stroke-linejoin="round"/>
<path d="M44.9 1267.8 L93.5 1267.8" fill="none" stroke="#d9d9d6" stroke-width="9" stroke-opacity="0.7" stroke-linecap="round" stroke-linejoin="round"/>
<path d="M142.2 1260.1 L190.8 1260.1" fill="none" stroke="#d9d9d6" stroke-width="9" stroke-opacity="0.7" stroke-linecap="round" stroke-linejoin="round"/>
<path d="M239.4 1246.4 L288.0 1246.4" fill="none" stroke="#d9d9d6" stroke-width="9" stroke-opacity="0.7" stroke-linecap="round" stroke-linejoin="round"/>
<path d="M44.9 1324.2 L83.8 1324.2" fill="none" stroke="#d9d9d6" stroke-width="9" stroke-opacity="0.7" stroke-linecap="round" stroke-linejoin="round"/>
<path d="M132.4 1353.4 L190.8 1353.4" fill="none" stroke="#d9d9d6" stroke-width="9" stroke-opacity="0.7" stroke-linecap="round" stroke-linejoin="round"/>
<path d="M239.4 1349.5 L288.0 1349.5" fill="none" stroke="#d9d9d6" stroke-width="9" stroke-opacity="0.7" stroke-linecap="round" stroke-linejoin="round"/>
<path d="M171.3 1295.1 L220.0 1295.1" fill="none" stroke="#d9d9d6" stroke-width="9" stroke-opacity="0.7" stroke-linecap="round" stroke-linejoin="round"/>
<path d="M64.4 1228.9 L103.3 1228.9" fill="none" stroke="#d9d9d6" stroke-width="9" stroke-opacity="0.7" stroke-linecap="round" stroke-linejoin="round"/>
<path d="M132.4 1201.7 L200.5 1201.7" fill="none" stroke="#d9d9d6" stroke-width="9" stroke-opacity="0.7" stroke-linecap="round" stroke-linejoin="round"/>
<path d="M70.2 1131.7 L93.5 1145.3 L122.7 1162.8 L149.9 1190.0 L142.2 1211.4" fill="none" stroke="#ecea9a" stroke-width="4" stroke-opacity="1" stroke-linecap="round" stroke-linejoin="round"/>
<path d="M293.9 1131.7 L274.4 1135.6 L266.6 1158.9 L239.4 1176.4 L220.0 1188.1 L177.2 1197.8" fill="none" stroke="#ecea9a" stroke-width="4" stroke-opacity="1" stroke-linecap="round" stroke-linejoin="round"/>
<path d="M220.0 1188.1 L293.9 1188.1" fill="none" stroke="#e8e8a0" stroke-width="3" stroke-opacity="1" stroke-linecap="round" stroke-linejoin="round"/>
<path d="M149.9 1190.0 L173.3 1164.7 L188.8 1139.5" fill="none" stroke="#ecea9a" stroke-width="3" stroke-opacity="1" stroke-linecap="round" stroke-linejoin="round"/>
<path d="M155.8 1256.2 L142.2 1285.3 L83.8 1322.3 L70.2 1372.9" fill="none" stroke="#ecea9a" stroke-width="4" stroke-opacity="1" stroke-linecap="round" stroke-linejoin="round"/>
<path d="M167.4 1256.2 L173.3 1314.5 L181.1 1353.4" fill="none" stroke="#ecea9a" stroke-width="3.5" stroke-opacity="1" stroke-linecap="round" stroke-linejoin="round"/>
<path d="M235.5 1275.6 L258.9 1291.2 L293.9 1299.0" fill="none" stroke="#ecea9a" stroke-width="4" stroke-opacity="1" stroke-linecap="round" stroke-linejoin="round"/>
<path d="M239.4 1339.8 L249.1 1363.1 L268.6 1378.7" fill="none" stroke="#ecea9a" stroke-width="3.5" stroke-opacity="1" stroke-linecap="round" stroke-linejoin="round"/>
<path d="M37.1 1295.1 L72.1 1279.5" fill="none" stroke="#ecea9a" stroke-width="3" stroke-opacity="1" stroke-linecap="round" stroke-linejoin="round"/>
<path d="M288.0 1365.1 L286.1 1380.6" fill="none" stroke="#ecea9a" stroke-width="4" stroke-opacity="1" stroke-linecap="round" stroke-linejoin="round"/>
<path d="M39.1 1217.3 L64.4 1225.0 L83.8 1246.4 L89.6 1260.1 L107.1 1295.1 L111.0 1334.0" fill="none" stroke="#f0b88a" stroke-width="4.5" stroke-opacity="1" stroke-linecap="round" stroke-linejoin="round"/>
<path d="M142.2 1242.5 L173.3 1242.5" fill="none" stroke="#f0b88a" stroke-width="5" stroke-opacity="1" stroke-linecap="round" stroke-linejoin="round"/>
<path d="M103.3 1359.3 L87.7 1380.6" fill="none" stroke="#f0b88a" stroke-width="3.5" stroke-opacity="1" stroke-linecap="round" stroke-linejoin="round"/>
<ellipse cx="105.2" cy="1260.1" rx="7" ry="4.500" fill="#e6e23c"/>
<ellipse cx="104.2" cy="1355.8" rx="7" ry="5" fill="#3e9a6a"/>
<ellipse cx="109.1" cy="1317.4" rx="7" ry="4.500" fill="#6a82c8"/>
<circle cx="115.9" cy="1210.4" r="5" fill="#a9b9e4"/>
<circle cx="149.0" cy="1190.0" r="4" fill="#eee83a"/>
<circle cx="229.7" cy="1295.1" r="3.500" fill="#e09030"/>
<circle cx="190.8" cy="1323.9" r="3.500" fill="#e0a030"/>
<circle cx="88.7" cy="1259.7" r="4" fill="#f0a060"/>
<path d="M64.4 1131.7 L87.7 1184.2" fill="none" stroke="#c9d4e4" stroke-width="5" stroke-opacity="1" stroke-linecap="round" stroke-linejoin="round"/>
<rect x="188.8" y="1293.1" width="40.8" height="33.1" fill="#d8ecf6" stroke="#9ccdf0" stroke-width="2.500"/>
</g><g filter="url(#ob2)">
<path d="M130.5 1137.5 L138.3 1132.6 L148.0 1138.5 L159.7 1132.6 L169.4 1134.6 L181.1 1143.3 L192.7 1154.0 L202.5 1151.1 L198.6 1158.9 L210.2 1168.6 L192.7 1170.6 L179.1 1178.4 L186.9 1192.0 L194.7 1201.7 L215.1 1205.6 L216.1 1217.3 L208.3 1236.7 L220.0 1246.4 L233.6 1262.0 L249.1 1266.9" fill="none" stroke="#6e6e6e" stroke-width="4.8" stroke-opacity="1" stroke-linecap="round" stroke-linejoin="round"/>
<path d="M208.3 1248.4 L196.6 1256.2 L186.9 1273.7 L190.8 1279.5 L200.5 1273.7 L218.0 1269.8 L225.8 1277.6 L221.9 1289.2 L227.7 1314.5 L235.5 1334.0 L225.8 1341.7 L223.9 1363.1 L212.2 1376.8 L196.6 1380.6 L186.9 1372.9 L179.1 1370.9 L177.2 1380.6" fill="none" stroke="#6e6e6e" stroke-width="4.4" stroke-opacity="1" stroke-linecap="round" stroke-linejoin="round"/>
<path d="M130.5 1137.5 L128.5 1151.1 L134.4 1160.8 L114.9 1174.5 L101.3 1192.0 L99.4 1217.3 L114.9 1234.8 L126.6 1248.4 L116.9 1263.9 L120.8 1273.7 L132.4 1277.6 L116.9 1291.2 L130.5 1293.1 L146.1 1285.3 L134.4 1306.7 L130.5 1328.1 L157.7 1332.0 L200.5 1334.9" fill="none" stroke="#6e6e6e" stroke-width="4.8" stroke-opacity="1" stroke-linecap="round" stroke-linejoin="round"/>
<path d="M146.1 1285.3 L173.3 1286.3 L188.8 1306.7" fill="none" stroke="#6e6e6e" stroke-width="4.4" stroke-opacity="1" stroke-linecap="round" stroke-linejoin="round"/>
<path d="M216.1 1332.0 L229.7 1339.8" fill="none" stroke="#6e6e6e" stroke-width="4" stroke-opacity="1" stroke-linecap="round" stroke-linejoin="round"/>
<path d="M167.4 1339.8 L159.7 1359.3 L161.6 1380.6" fill="none" stroke="#6e6e6e" stroke-width="4.4" stroke-opacity="1" stroke-linecap="round" stroke-linejoin="round"/>
</g></g>
<rect x="33" y="1387" width="268" height="1" fill="#c9c9c9"/>
</svg>
<div class="abs" style="left:332px;top:1341px;width:1592px;height:1.300px;background:#d5e6f5"></div>
<div class="abs" style="left:334px;top:1348.300px;width:493.700px;height:40.300px;border:1.600px solid #b6cfe5"></div>
<div class="abs" style="left:337.500px;top:1346px;width:93.500px;height:6px;background:#fff"></div>
<div class="t" style="left:340.20px;top:1343.76px;font-size:10.8px;color:#111;letter-spacing:-0.037px;"><span>Ansichtssteuerung</span></div>
<svg style="left:332px;top:1352px" width="500" height="38" viewBox="332 1352 500 38">
<rect class="ic2" style="stroke-width:1.400" x="344" y="1360.3" width="4.900" height="4.600" rx="1"/><path class="ic" style="stroke-width:1.500" d="M354 1362.6 L367.400 1362.6"/>
<rect class="ic2 bl" style="stroke-width:1.400" x="344" y="1369.1" width="4.900" height="4.600" rx="1"/><path class="ic" style="stroke-width:1.500" d="M354 1371.4 L367.400 1371.4"/>
<rect class="ic2" style="stroke-width:1.400" x="344" y="1377.9" width="4.900" height="4.600" rx="1"/><path class="ic" style="stroke-width:1.500" d="M354 1380.2 L367.400 1380.2"/>
<path d="M383.5 1363.300 L383.5 1378.800" stroke="#8a8a8a" stroke-width="1.100"/>
<path d="M662.5 1363.300 L662.5 1378.800" stroke="#8a8a8a" stroke-width="1.100"/>
<path d="M719.5 1363.300 L719.5 1378.800" stroke="#8a8a8a" stroke-width="1.100"/>
<path d="M776.5 1363.300 L776.5 1378.800" stroke="#8a8a8a" stroke-width="1.100"/>
<rect x="400.400" y="1359.600" width="24.800" height="24.200" fill="none" stroke="#2e9be0" stroke-width="1.500" stroke-dasharray="1.500 4.650"/>
<circle class="ic" cx="412.8" cy="1370.8" r="7.5"/><path class="ic" style="stroke-width:1.800" d="M407.2 1376.4 L400.6 1383.0"/><path class="ic bl" style="stroke-width:1.700" d="M408 1370.800 L417.800 1370.800 M412.900 1365.900 L412.900 1375.700"/>
<circle class="ic" cx="451.400" cy="1369.500" r="7.500"/><path class="ic" style="stroke-width:1.800" d="M445.800 1375.100 L439.500 1381.400"/><path class="ic bl" style="stroke-width:1.700" d="M446.800 1369.500 L456.100 1369.500"/>
<circle class="ic" cx="486.100" cy="1371.600" r="7.500"/><path class="ic" style="stroke-width:1.800" d="M480.500 1377.200 L474.200 1383.500"/>
<path class="ic bl" style="stroke-width:1.800;stroke-linecap:butt;stroke-linejoin:miter" d="M474.700 1365 L474.700 1359.900 L480 1359.900 M492.800 1359.900 L498.200 1359.900 L498.200 1365 M498.200 1378.300 L498.200 1383.500 L492.800 1383.500"/>
<circle class="ic" cx="523.400" cy="1371.600" r="7.500"/><path class="ic" style="stroke-width:1.800" d="M517.800 1377.200 L511.500 1383.500"/>
<path class="ic bl" style="stroke-width:1.800;stroke-linejoin:miter" d="M523.400 1371.200 L535 1360.100 M528.500 1359.900 L535.300 1359.900 L535.300 1366.200"/>
<path class="ic" d="M554.3 1365.6 A8.2 8.2 0 0 1 568.5 1372.4 M563.7 1369.1 L568.5 1372.8 L572.4 1368.5"/><path class="ic" d="M566.6 1376.9 A8.2 8.2 0 0 1 552.6 1370.1 M548.7 1374.1 L552.6 1369.7 L557.6 1373.0"/>
<path class="ic" d="M599.8 1379.9 A8.3 8.3 0 1 0 590.4 1372.7 L592.0 1376.6 M586.6 1373.4 L592.0 1376.7 L595.3 1371.8"/>
<path class="ic" style="stroke:#9c9c9c" d="M631.9 1379.9 A8.3 8.3 0 1 1 641.3 1372.7 L639.7 1376.6 M645.1 1373.4 L639.7 1376.7 L636.4 1371.8"/>
<path class="ic" style="stroke-width:1.700" d="M685.300 1365.400 L685.300 1359.900 L698 1359.900 L698 1365.400 M684.600 1378.400 L681 1378.400 Q679.500 1378.400 679.500 1376.900 L679.500 1366.900 Q679.500 1365.400 681 1365.400 L702.200 1365.400 Q703.700 1365.400 703.700 1366.900 L703.700 1376.900 Q703.700 1378.400 702.200 1378.400 L698.700 1378.400 M684.600 1371.800 L698.700 1371.800 L698.700 1383 L684.600 1383 Z"/><circle cx="683" cy="1368.600" r="0.700" fill="#787878"/><path class="ic bl" style="stroke-linecap:butt;stroke-width:1.600" d="M687.500 1376.300 L696 1376.300 M687.500 1378.800 L696 1378.800"/>
<path class="ic" style="stroke-width:1.600" d="M742.500 1365.400 L759.400 1373.200 L753.100 1375.300 L760.100 1381.600 L757.300 1383.800 L750.200 1377.400 L747.400 1382.300 Z"/><path class="ic2 bl" style="stroke-width:1.400" d="M743.900 1360.300 L743.900 1363 M738.300 1361.900 L740.300 1363.900 M736.600 1367.500 L739.500 1367.500"/><path class="ic bl" style="stroke-width:1.700;stroke-linecap:butt" d="M739.300 1375.300 L739.300 1382.600 M736.300 1382.600 L742.500 1382.600 M737 1375.800 L739.300 1375.800"/><circle class="blf" cx="739.200" cy="1372.200" r="1.200"/>
<path class="ic" style="stroke-width:1.700" d="M796.100 1367.500 L796.100 1360.500 L803.200 1360.500 L805.300 1363.300 L815.200 1363.300 L815.200 1367.500 M793.900 1367.500 L817.600 1367.500 L815.900 1383 L795.500 1383 Z"/>
</svg>
<div id="xl">
<div class="abs" style="left:0px;top:0px;width:934px;height:35px;background:#217346;"></div>
<div class="t" style="left:22.00px;top:12.01px;font-size:11.8px;color:#e4efe8;letter-spacing:-0.004px;"><span>Automatisches Speichern</span></div>
<svg style="left:0;top:0" width="933" height="40" viewBox="1188 5 933 40">
<defs><linearGradient id="ng" x1="0" y1="0" x2="0" y2="1"><stop offset="0" stop-color="#2c6c4d"/><stop offset="0.35" stop-color="#2f7753"/><stop offset="1" stop-color="#35835b"/></linearGradient><pattern id="np" width="3" height="3" patternUnits="userSpaceOnUse"><rect x="0" y="0" width="1" height="1" fill="#25603f" fill-opacity="0.55"/><rect x="1.500" y="1.500" width="1" height="1" fill="#25603f" fill-opacity="0.35"/></pattern></defs><rect x="1755" y="7.200" width="126.200" height="28.800" fill="url(#ng)"/><rect x="1755" y="10" width="126.200" height="26" fill="url(#np)"/><path d="M1759 8.500 L1875 8.500" stroke="#23352b" stroke-width="1" stroke-dasharray="1 2"/><g fill-opacity="0.8"><circle cx="1862" cy="16.500" r="0.600" fill="#4a3fb0"/><circle cx="1866.500" cy="16.500" r="0.600" fill="#4a3fb0"/><circle cx="1871.500" cy="17.500" r="0.600" fill="#4a3fb0"/><circle cx="1859.500" cy="18.500" r="0.600" fill="#4a3fb0"/><circle cx="1862.500" cy="21.500" r="0.600" fill="#2d7fc0"/><circle cx="1866.500" cy="20.500" r="0.600" fill="#2d7fc0"/><circle cx="1869.500" cy="22.500" r="0.600" fill="#2d7fc0"/><circle cx="1862.500" cy="24.500" r="0.600" fill="#2d7fc0"/><circle cx="1867.500" cy="25.500" r="0.600" fill="#2d7fc0"/><circle cx="1858.500" cy="26.500" r="0.600" fill="#2d7fc0"/><circle cx="1864.500" cy="27.500" r="0.600" fill="#2d7fc0"/><circle cx="1872.500" cy="27.500" r="0.600" fill="#2d7fc0"/><circle cx="1862.500" cy="28.500" r="0.700" fill="#a5d3b8"/><circle cx="1866.500" cy="23.500" r="0.700" fill="#a5d3b8"/><circle cx="1867.500" cy="27.500" r="0.700" fill="#a5d3b8"/><circle cx="1866.500" cy="30.500" r="0.700" fill="#a5d3b8"/><circle cx="1862.500" cy="35.500" r="0.700" fill="#a5d3b8"/><circle cx="1867.500" cy="35.500" r="0.700" fill="#a5d3b8"/><circle cx="1870.500" cy="35.500" r="0.700" fill="#a5d3b8"/></g><g fill="#8a6a7a" fill-opacity="0.7"><circle cx="1857" cy="12.500" r="0.600"/><circle cx="1861" cy="14.500" r="0.600"/><circle cx="1865" cy="12.500" r="0.600"/><circle cx="1869" cy="13.500" r="0.600"/><circle cx="1873" cy="12.500" r="0.600"/><circle cx="1857" cy="20.500" r="0.600"/><circle cx="1860" cy="23.500" r="0.600"/><circle cx="1864" cy="19.500" r="0.600"/><circle cx="1868" cy="18.500" r="0.600"/><circle cx="1872" cy="20.500" r="0.600"/><circle cx="1874" cy="25.500" r="0.600"/><circle cx="1860" cy="29.500" r="0.600"/><circle cx="1864" cy="31.500" r="0.600"/><circle cx="1869" cy="29.500" r="0.600"/><circle cx="1871" cy="31.500" r="0.600"/></g>
<rect class="xi" x="1351.500" y="14.500" width="37" height="15.500" rx="7.750"/><circle cx="1360" cy="22.300" r="3.800" fill="#fff"/>
<path class="xi" d="M1402.500 16.800 L1415 16.800 L1417.500 19.300 L1417.500 31 L1402.500 31 Z M1405.500 16.800 L1405.500 21.500 L1413.500 21.500 L1413.500 16.800 M1405.500 31 L1405.500 25.500 L1414.500 25.500 L1414.500 31"/>
<path class="xi" d="M1432.500 17 L1432.500 22.500 L1438 22.500 M1432.800 22.300 Q1436 17.500 1441 18.300 Q1446 19.500 1446 24.500 Q1445.500 28 1438.500 32"/>
<path class="xi" d="M1453.500 21 L1456 23.500 L1458.500 21"/>
<g opacity="0.45"><path class="xi" d="M1485.500 17 L1485.500 22.500 L1480 22.500 M1485.200 22.300 Q1482 17.500 1477 18.300 Q1472 19.500 1472 24.500 Q1472.500 28 1479.500 32"/><path class="xi" d="M1492.500 21 L1495 23.500 L1497.500 21"/></g>
<path class="xi" d="M1513.500 19.500 L1519.500 19.500 M1513.500 22.500 L1516.500 25.500 L1519.500 22.500"/>
<path d="M1630.500 21 L1636.500 21 L1633.500 24.500 Z" fill="#e4efe8"/>
<circle class="xi" cx="1716.500" cy="20.800" r="4.600"/><path class="xi" d="M1713.300 24.200 L1708.500 29.200"/>
<path class="xi" d="M1906.200 28.300 L1914.700 16.600 L1920.500 21.900 L1908.600 30.500 Z M1911.900 28.300 A2.200 2.200 0 0 0 1916.100 26.500 M1917.300 14.900 L1917.800 16.300 M1919.300 17.600 L1921.800 15.100 M1920.400 19.600 L1922 19.100"/>
<rect class="xi" x="1953.500" y="17.500" width="12.500" height="9.500"/><path class="xi" d="M1953.500 19.500 L1966 19.500 M1959.700 26.500 L1959.700 21.200 M1957.400 23 L1959.700 21 L1962 23"/>
<path class="xi" d="M2001.500 22.500 L2011.500 22.500"/>
<rect class="xi" x="2047.500" y="17.500" width="9.500" height="9.500"/>
<path class="xi" d="M2093.500 17.500 L2103 27 M2103 17.500 L2093.500 27"/>
</svg>
<div class="t" style="left:398.40px;top:12.01px;font-size:11.8px;color:#e4efe8;letter-spacing:-0.390px;"><span>Beric...</span></div>
<div class="abs" style="left:0px;top:35px;width:934px;height:30.5px;background:#f3f2f1;"></div>
<div class="abs" style="left:0px;top:65px;width:934px;height:1px;background:#d8d8d8;"></div>
<div class="t" style="left:14.00px;top:44.22px;font-size:12.5px;color:#424242;letter-spacing:0.163px;"><span>Datei</span></div>
<div class="t" style="left:73.30px;top:44.22px;font-size:12.5px;color:#424242;letter-spacing:0.059px;"><span>Start</span></div>
<div class="t" style="left:129.30px;top:44.22px;font-size:12.5px;color:#424242;letter-spacing:0.005px;"><span>Einfügen</span></div>
<div class="t" style="left:210.00px;top:44.22px;font-size:12.5px;color:#424242;letter-spacing:0.091px;"><span>Seitenlayout</span></div>
<div class="t" style="left:311.00px;top:44.22px;font-size:12.5px;color:#424242;letter-spacing:0.137px;"><span>Formeln</span></div>
<div class="t" style="left:388.00px;top:44.22px;font-size:12.5px;color:#424242;letter-spacing:0.068px;"><span>Daten</span></div>
<div class="t" style="left:451.50px;top:44.22px;font-size:12.5px;color:#424242;letter-spacing:0.345px;"><span>Überprüfen</span></div>
<div class="t" style="left:548.00px;top:44.22px;font-size:12.5px;color:#424242;letter-spacing:0.000px;"><span>Ansicht</span></div>
<div class="t" style="left:618.00px;top:44.22px;font-size:12.5px;color:#424242;letter-spacing:0.077px;"><span>Hilfe</span></div>
<div class="t" style="left:673.00px;top:44.22px;font-size:12.5px;color:#424242;letter-spacing:0.415px;"><span>Acrobat</span></div>
<div class="abs" style="left:768.5px;top:38.5px;width:112px;height:23px;background:#fff;border:1px solid #e1dfdd;border-radius:2px"></div>
<div class="abs" style="left:889.5px;top:38.5px;width:31px;height:23px;background:#fff;border:1px solid #e1dfdd;border-radius:2px"></div>
<div class="t" style="left:792.70px;top:44.22px;font-size:12.5px;color:#217346;letter-spacing:0.178px;font-weight:bold;"><span>Kommentare</span></div>
<svg style="left:0;top:35px" width="933" height="36" viewBox="1188 40 933 36"><path d="M1964.500 50 L1975 50 L1975 57.500 L1969 57.500 L1966.500 60 L1966.500 57.500 L1964.500 57.500 Z" fill="none" stroke="#217346" stroke-width="1.200"/><path d="M2088 56 L2088 60.500 L2098 60.500 L2098 56.500 M2089.500 58 Q2090 52.500 2095.500 52.500 M2093.500 50 L2096.300 52.500 L2093.500 55" fill="none" stroke="#217346" stroke-width="1.200"/></svg>
<div class="abs" style="left:6px;top:76px;width:102px;height:25.5px;background:#fff;border:1px solid #c8c8c8"></div>
<div class="t" style="left:13.40px;top:82.81px;font-size:13.1px;color:#333;letter-spacing:-0.708px;"><span>A1</span></div>
<div class="abs" style="left:138px;top:76px;width:110px;height:25.5px;background:#fff;border:1px solid #c8c8c8"></div>
<div class="abs" style="left:251px;top:76px;width:677px;height:25.5px;background:#fff;border:1px solid #c8c8c8"></div>
<div class="t" style="left:263.50px;top:82.81px;font-size:13.1px;color:#222;letter-spacing:0.105px;"><span>ausgegeben durch S. Müller (SM) am 21.03.2022</span></div>
<svg style="left:0;top:70px" width="933" height="46" viewBox="1188 75 933 46"><path d="M1280.500 92 L1288 92 L1284.250 96.500 Z" fill="#666"/><circle cx="1310" cy="89" r="0.900" fill="#999"/><circle cx="1310" cy="94" r="0.900" fill="#999"/><circle cx="1310" cy="99" r="0.900" fill="#999"/><path d="M1340.500 89.500 L1349.500 98.500 M1349.500 89.500 L1340.500 98.500" stroke="#c2c2c2" stroke-width="1.300" fill="none"/><path d="M1376 94.500 L1379.500 98.500 L1387 89.500" stroke="#c2c2c2" stroke-width="1.600" fill="none"/><path d="M2102.500 92.500 L2106.500 96.500 L2110.500 92.500" stroke="#555" stroke-width="1.700" fill="none"/></svg>
<div class="t" style="left:223.50px;top:81.44px;font-size:15px;color:#555;font-family:'Liberation Serif',serif;"><span><i>f</i><i style="font-size:10.500px">x</i></span></div>
<div class="abs" style="left:26px;top:132px;width:885.5px;height:1113px;background:#fff;"></div>
<div class="abs" style="left:0px;top:131px;width:911.5px;height:1px;background:#9f9f9f;"></div>
<div class="t" style="left:26.00px;top:117.13px;font-size:12.6px;color:#333;width:184px;text-align:center;"><span>A</span></div>
<div class="abs" style="left:209.5px;top:113px;width:1px;height:18.5px;background:#b4b4b4;"></div>
<div class="t" style="left:210.00px;top:117.13px;font-size:12.6px;color:#333;width:93.5px;text-align:center;"><span>B</span></div>
<div class="abs" style="left:303.0px;top:113px;width:1px;height:18.5px;background:#b4b4b4;"></div>
<div class="t" style="left:303.50px;top:117.13px;font-size:12.6px;color:#333;width:98.5px;text-align:center;"><span>C</span></div>
<div class="abs" style="left:401.5px;top:113px;width:1px;height:18.5px;background:#b4b4b4;"></div>
<div class="t" style="left:402.00px;top:117.13px;font-size:12.6px;color:#333;width:87px;text-align:center;"><span>D</span></div>
<div class="abs" style="left:488.5px;top:113px;width:1px;height:18.5px;background:#b4b4b4;"></div>
<div class="t" style="left:489.00px;top:117.13px;font-size:12.6px;color:#333;width:98.5px;text-align:center;"><span>E</span></div>
<div class="abs" style="left:587.0px;top:113px;width:1px;height:18.5px;background:#b4b4b4;"></div>
<div class="t" style="left:587.50px;top:117.13px;font-size:12.6px;color:#333;width:64.0px;text-align:center;"><span>F</span></div>
<div class="abs" style="left:651.0px;top:113px;width:1px;height:18.5px;background:#b4b4b4;"></div>
<div class="t" style="left:651.50px;top:117.13px;font-size:12.6px;color:#333;width:64.0px;text-align:center;"><span>G</span></div>
<div class="abs" style="left:715.0px;top:113px;width:1px;height:18.5px;background:#b4b4b4;"></div>
<div class="t" style="left:715.50px;top:117.13px;font-size:12.6px;color:#333;width:64.0px;text-align:center;"><span>H</span></div>
<div class="abs" style="left:779.0px;top:113px;width:1px;height:18.5px;background:#b4b4b4;"></div>
<div class="t" style="left:779.50px;top:117.13px;font-size:12.6px;color:#333;width:64.0px;text-align:center;"><span>I</span></div>
<div class="abs" style="left:843.0px;top:113px;width:1px;height:18.5px;background:#b4b4b4;"></div>
<div class="t" style="left:843.50px;top:117.13px;font-size:12.6px;color:#333;width:64.0px;text-align:center;"><span>J</span></div>
<div class="abs" style="left:907.0px;top:113px;width:1px;height:18.5px;background:#b4b4b4;"></div>
<div class="abs" style="left:25.5px;top:113px;width:1px;height:1132px;background:#b4b4b4;"></div>
<svg style="left:10px;top:116px" width="14" height="14" viewBox="0 0 14 14"><path d="M13 1 L13 13 L1 13 Z" fill="#b5b5b5"/></svg>
<div class="t" style="left:1.00px;top:136.56px;font-size:12.8px;color:#333;width:25px;text-align:center;"><span>1</span></div>
<div class="abs" style="left:1px;top:151px;width:25px;height:1px;background:#b0b0b0;"></div>
<div class="abs" style="left:715.5px;top:151px;width:196px;height:1px;background:#d6d6d6;"></div>
<div class="t" style="left:1.00px;top:156.56px;font-size:12.8px;color:#333;width:25px;text-align:center;"><span>2</span></div>
<div class="abs" style="left:1px;top:171px;width:25px;height:1px;background:#b0b0b0;"></div>
<div class="abs" style="left:26px;top:171px;width:885.5px;height:1px;background:#d6d6d6;"></div>
<div class="t" style="left:1.00px;top:176.56px;font-size:12.8px;color:#333;width:25px;text-align:center;"><span>3</span></div>
<div class="abs" style="left:1px;top:191px;width:25px;height:1px;background:#b0b0b0;"></div>
<div class="abs" style="left:26px;top:191px;width:885.5px;height:1px;background:#d6d6d6;"></div>
<div class="t" style="left:1.00px;top:196.56px;font-size:12.8px;color:#333;width:25px;text-align:center;"><span>4</span></div>
<div class="abs" style="left:1px;top:211px;width:25px;height:1px;background:#b0b0b0;"></div>
<div class="abs" style="left:26px;top:211px;width:885.5px;height:1px;background:#d6d6d6;"></div>
<div class="t" style="left:1.00px;top:216.56px;font-size:12.8px;color:#333;width:25px;text-align:center;"><span>5</span></div>
<div class="abs" style="left:1px;top:231px;width:25px;height:1px;background:#b0b0b0;"></div>
<div class="abs" style="left:26px;top:231px;width:885.5px;height:1px;background:#d6d6d6;"></div>
<div class="t" style="left:1.00px;top:236.56px;font-size:12.8px;color:#333;width:25px;text-align:center;"><span>6</span></div>
<div class="abs" style="left:1px;top:251px;width:25px;height:1px;background:#b0b0b0;"></div>
<div class="abs" style="left:26px;top:251px;width:885.5px;height:1px;background:#d6d6d6;"></div>
<div class="t" style="left:1.00px;top:256.56px;font-size:12.8px;color:#333;width:25px;text-align:center;"><span>7</span></div>
<div class="abs" style="left:1px;top:271px;width:25px;height:1px;background:#b0b0b0;"></div>
<div class="abs" style="left:26px;top:271px;width:885.5px;height:1px;background:#d6d6d6;"></div>
<div class="t" style="left:1.00px;top:276.56px;font-size:12.8px;color:#333;width:25px;text-align:center;"><span>8</span></div>
<div class="abs" style="left:1px;top:291px;width:25px;height:1px;background:#b0b0b0;"></div>
<div class="abs" style="left:26px;top:291px;width:885.5px;height:1px;background:#d6d6d6;"></div>
<div class="t" style="left:1.00px;top:296.56px;font-size:12.8px;color:#333;width:25px;text-align:center;"><span>9</span></div>
<div class="abs" style="left:1px;top:311px;width:25px;height:1px;background:#b0b0b0;"></div>
<div class="abs" style="left:26px;top:311px;width:885.5px;height:1px;background:#d6d6d6;"></div>
<div class="t" style="left:1.00px;top:316.56px;font-size:12.8px;color:#333;width:25px;text-align:center;"><span>10</span></div>
<div class="abs" style="left:1px;top:331px;width:25px;height:1px;background:#b0b0b0;"></div>
<div class="abs" style="left:26px;top:331px;width:885.5px;height:1px;background:#d6d6d6;"></div>
<div class="t" style="left:1.00px;top:336.56px;font-size:12.8px;color:#333;width:25px;text-align:center;"><span>11</span></div>
<div class="abs" style="left:1px;top:351px;width:25px;height:1px;background:#b0b0b0;"></div>
<div class="abs" style="left:26px;top:351px;width:885.5px;height:1px;background:#d6d6d6;"></div>
<div class="t" style="left:1.00px;top:356.56px;font-size:12.8px;color:#333;width:25px;text-align:center;"><span>12</span></div>
<div class="abs" style="left:1px;top:371px;width:25px;height:1px;background:#b0b0b0;"></div>
<div class="abs" style="left:26px;top:371px;width:885.5px;height:1px;background:#d6d6d6;"></div>
<div class="t" style="left:1.00px;top:376.56px;font-size:12.8px;color:#333;width:25px;text-align:center;"><span>13</span></div>
<div class="abs" style="left:1px;top:391px;width:25px;height:1px;background:#b0b0b0;"></div>
<div class="abs" style="left:26px;top:391px;width:885.5px;height:1px;background:#d6d6d6;"></div>
<div class="t" style="left:1.00px;top:396.56px;font-size:12.8px;color:#333;width:25px;text-align:center;"><span>14</span></div>
<div class="abs" style="left:1px;top:411px;width:25px;height:1px;background:#b0b0b0;"></div>
<div class="abs" style="left:26px;top:411px;width:885.5px;height:1px;background:#d6d6d6;"></div>
<div class="t" style="left:1.00px;top:416.56px;font-size:12.8px;color:#333;width:25px;text-align:center;"><span>15</span></div>
<div class="abs" style="left:1px;top:431px;width:25px;height:1px;background:#b0b0b0;"></div>
<div class="abs" style="left:26px;top:431px;width:885.5px;height:1px;background:#d6d6d6;"></div>
<div class="t" style="left:1.00px;top:436.56px;font-size:12.8px;color:#333;width:25px;text-align:center;"><span>16</span></div>
<div class="abs" style="left:1px;top:451px;width:25px;height:1px;background:#b0b0b0;"></div>
<div class="abs" style="left:26px;top:451px;width:885.5px;height:1px;background:#d6d6d6;"></div>
<div class="t" style="left:1.00px;top:456.56px;font-size:12.8px;color:#333;width:25px;text-align:center;"><span>17</span></div>
<div class="abs" style="left:1px;top:471px;width:25px;height:1px;background:#b0b0b0;"></div>
<div class="abs" style="left:26px;top:471px;width:885.5px;height:1px;background:#d6d6d6;"></div>
<div class="t" style="left:1.00px;top:476.56px;font-size:12.8px;color:#333;width:25px;text-align:center;"><span>18</span></div>
<div class="abs" style="left:1px;top:491px;width:25px;height:1px;background:#b0b0b0;"></div>
<div class="abs" style="left:26px;top:491px;width:885.5px;height:1px;background:#d6d6d6;"></div>
<div class="t" style="left:1.00px;top:496.56px;font-size:12.8px;color:#333;width:25px;text-align:center;"><span>19</span></div>
<div class="abs" style="left:1px;top:511px;width:25px;height:1px;background:#b0b0b0;"></div>
<div class="abs" style="left:26px;top:511px;width:885.5px;height:1px;background:#d6d6d6;"></div>
<div class="t" style="left:1.00px;top:516.56px;font-size:12.8px;color:#333;width:25px;text-align:center;"><span>20</span></div>
<div class="abs" style="left:1px;top:531px;width:25px;height:1px;background:#b0b0b0;"></div>
<div class="abs" style="left:26px;top:531px;width:885.5px;height:1px;background:#d6d6d6;"></div>
<div class="t" style="left:1.00px;top:536.56px;font-size:12.8px;color:#333;width:25px;text-align:center;"><span>21</span></div>
<div class="abs" style="left:1px;top:551px;width:25px;height:1px;background:#b0b0b0;"></div>
<div class="abs" style="left:26px;top:551px;width:885.5px;height:1px;background:#d6d6d6;"></div>
<div class="t" style="left:1.00px;top:556.56px;font-size:12.8px;color:#333;width:25px;text-align:center;"><span>22</span></div>
<div class="abs" style="left:1px;top:571px;width:25px;height:1px;background:#b0b0b0;"></div>
<div class="abs" style="left:26px;top:571px;width:885.5px;height:1px;background:#d6d6d6;"></div>
<div class="t" style="left:1.00px;top:576.56px;font-size:12.8px;color:#333;width:25px;text-align:center;"><span>23</span></div>
<div class="abs" style="left:1px;top:591px;width:25px;height:1px;background:#b0b0b0;"></div>
<div class="abs" style="left:26px;top:591px;width:885.5px;height:1px;background:#d6d6d6;"></div>
<div class="t" style="left:1.00px;top:596.56px;font-size:12.8px;color:#333;width:25px;text-align:center;"><span>24</span></div>
<div class="abs" style="left:1px;top:611px;width:25px;height:1px;background:#b0b0b0;"></div>
<div class="abs" style="left:26px;top:611px;width:885.5px;height:1px;background:#d6d6d6;"></div>
<div class="t" style="left:1.00px;top:616.56px;font-size:12.8px;color:#333;width:25px;text-align:center;"><span>25</span></div>
<div class="abs" style="left:1px;top:631px;width:25px;height:1px;background:#b0b0b0;"></div>
<div class="abs" style="left:26px;top:631px;width:885.5px;height:1px;background:#d6d6d6;"></div>
<div class="t" style="left:1.00px;top:636.56px;font-size:12.8px;color:#333;width:25px;text-align:center;"><span>26</span></div>
<div class="abs" style="left:1px;top:651px;width:25px;height:1px;background:#b0b0b0;"></div>
<div class="abs" style="left:26px;top:651px;width:885.5px;height:1px;background:#d6d6d6;"></div>
<div class="t" style="left:1.00px;top:656.56px;font-size:12.8px;color:#333;width:25px;text-align:center;"><span>27</span></div>
<div class="abs" style="left:1px;top:671px;width:25px;height:1px;background:#b0b0b0;"></div>
<div class="abs" style="left:26px;top:671px;width:885.5px;height:1px;background:#d6d6d6;"></div>
<div class="t" style="left:1.00px;top:676.56px;font-size:12.8px;color:#333;width:25px;text-align:center;"><span>28</span></div>
<div class="abs" style="left:1px;top:691px;width:25px;height:1px;background:#b0b0b0;"></div>
<div class="abs" style="left:26px;top:691px;width:885.5px;height:1px;background:#d6d6d6;"></div>
<div class="t" style="left:1.00px;top:696.56px;font-size:12.8px;color:#333;width:25px;text-align:center;"><span>29</span></div>
<div class="abs" style="left:1px;top:711px;width:25px;height:1px;background:#b0b0b0;"></div>
<div class="abs" style="left:26px;top:711px;width:885.5px;height:1px;background:#d6d6d6;"></div>
<div class="t" style="left:1.00px;top:716.56px;font-size:12.8px;color:#333;width:25px;text-align:center;"><span>30</span></div>
<div class="abs" style="left:1px;top:731px;width:25px;height:1px;background:#b0b0b0;"></div>
<div class="abs" style="left:26px;top:731px;width:885.5px;height:1px;background:#d6d6d6;"></div>
<div class="t" style="left:1.00px;top:736.56px;font-size:12.8px;color:#333;width:25px;text-align:center;"><span>31</span></div>
<div class="abs" style="left:1px;top:751px;width:25px;height:1px;background:#b0b0b0;"></div>
<div class="abs" style="left:26px;top:751px;width:885.5px;height:1px;background:#d6d6d6;"></div>
<div class="t" style="left:1.00px;top:756.56px;font-size:12.8px;color:#333;width:25px;text-align:center;"><span>32</span></div>
<div class="abs" style="left:1px;top:771px;width:25px;height:1px;background:#b0b0b0;"></div>
<div class="abs" style="left:26px;top:771px;width:885.5px;height:1px;background:#d6d6d6;"></div>
<div class="t" style="left:1.00px;top:776.56px;font-size:12.8px;color:#333;width:25px;text-align:center;"><span>33</span></div>
<div class="abs" style="left:1px;top:791px;width:25px;height:1px;background:#b0b0b0;"></div>
<div class="abs" style="left:26px;top:791px;width:885.5px;height:1px;background:#d6d6d6;"></div>
<div class="t" style="left:1.00px;top:796.56px;font-size:12.8px;color:#333;width:25px;text-align:center;"><span>34</span></div>
<div class="abs" style="left:1px;top:811px;width:25px;height:1px;background:#b0b0b0;"></div>
<div class="abs" style="left:26px;top:811px;width:885.5px;height:1px;background:#d6d6d6;"></div>
<div class="t" style="left:1.00px;top:816.56px;font-size:12.8px;color:#333;width:25px;text-align:center;"><span>35</span></div>
<div class="abs" style="left:1px;top:831px;width:25px;height:1px;background:#b0b0b0;"></div>
<div class="abs" style="left:26px;top:831px;width:885.5px;height:1px;background:#d6d6d6;"></div>
<div class="t" style="left:1.00px;top:836.56px;font-size:12.8px;color:#333;width:25px;text-align:center;"><span>36</span></div>
<div class="abs" style="left:1px;top:851px;width:25px;height:1px;background:#b0b0b0;"></div>
<div class="abs" style="left:26px;top:851px;width:885.5px;height:1px;background:#d6d6d6;"></div>
<div class="t" style="left:1.00px;top:856.56px;font-size:12.8px;color:#333;width:25px;text-align:center;"><span>37</span></div>
<div class="abs" style="left:1px;top:871px;width:25px;height:1px;background:#b0b0b0;"></div>
<div class="abs" style="left:26px;top:871px;width:885.5px;height:1px;background:#d6d6d6;"></div>
<div class="t" style="left:1.00px;top:876.56px;font-size:12.8px;color:#333;width:25px;text-align:center;"><span>38</span></div>
<div class="abs" style="left:1px;top:891px;width:25px;height:1px;background:#b0b0b0;"></div>
<div class="abs" style="left:26px;top:891px;width:885.5px;height:1px;background:#d6d6d6;"></div>
<div class="t" style="left:1.00px;top:896.56px;font-size:12.8px;color:#333;width:25px;text-align:center;"><span>39</span></div>
<div class="abs" style="left:1px;top:911px;width:25px;height:1px;background:#b0b0b0;"></div>
<div class="abs" style="left:26px;top:911px;width:885.5px;height:1px;background:#d6d6d6;"></div>
<div class="t" style="left:1.00px;top:916.56px;font-size:12.8px;color:#333;width:25px;text-align:center;"><span>40</span></div>
<div class="abs" style="left:1px;top:931px;width:25px;height:1px;background:#b0b0b0;"></div>
<div class="abs" style="left:26px;top:931px;width:885.5px;height:1px;background:#d6d6d6;"></div>
<div class="t" style="left:1.00px;top:936.56px;font-size:12.8px;color:#333;width:25px;text-align:center;"><span>41</span></div>
<div class="abs" style="left:1px;top:951px;width:25px;height:1px;background:#b0b0b0;"></div>
<div class="abs" style="left:26px;top:951px;width:885.5px;height:1px;background:#d6d6d6;"></div>
<div class="t" style="left:1.00px;top:956.56px;font-size:12.8px;color:#333;width:25px;text-align:center;"><span>42</span></div>
<div class="abs" style="left:1px;top:971px;width:25px;height:1px;background:#b0b0b0;"></div>
<div class="abs" style="left:26px;top:971px;width:885.5px;height:1px;background:#d6d6d6;"></div>
<div class="t" style="left:1.00px;top:976.56px;font-size:12.8px;color:#333;width:25px;text-align:center;"><span>43</span></div>
<div class="abs" style="left:1px;top:991px;width:25px;height:1px;background:#b0b0b0;"></div>
<div class="abs" style="left:26px;top:991px;width:885.5px;height:1px;background:#d6d6d6;"></div>
<div class="t" style="left:1.00px;top:996.56px;font-size:12.8px;color:#333;width:25px;text-align:center;"><span>44</span></div>
<div class="abs" style="left:1px;top:1011px;width:25px;height:1px;background:#b0b0b0;"></div>
<div class="abs" style="left:26px;top:1011px;width:885.5px;height:1px;background:#d6d6d6;"></div>
<div class="t" style="left:1.00px;top:1016.56px;font-size:12.8px;color:#333;width:25px;text-align:center;"><span>45</span></div>
<div class="abs" style="left:1px;top:1031px;width:25px;height:1px;background:#b0b0b0;"></div>
<div class="abs" style="left:26px;top:1031px;width:885.5px;height:1px;background:#d6d6d6;"></div>
<div class="t" style="left:1.00px;top:1036.56px;font-size:12.8px;color:#333;width:25px;text-align:center;"><span>46</span></div>
<div class="abs" style="left:1px;top:1051px;width:25px;height:1px;background:#b0b0b0;"></div>
<div class="abs" style="left:26px;top:1051px;width:885.5px;height:1px;background:#d6d6d6;"></div>
<div class="t" style="left:1.00px;top:1056.56px;font-size:12.8px;color:#333;width:25px;text-align:center;"><span>47</span></div>
<div class="abs" style="left:1px;top:1071px;width:25px;height:1px;background:#b0b0b0;"></div>
<div class="abs" style="left:26px;top:1071px;width:885.5px;height:1px;background:#d6d6d6;"></div>
<div class="t" style="left:1.00px;top:1076.56px;font-size:12.8px;color:#333;width:25px;text-align:center;"><span>48</span></div>
<div class="abs" style="left:1px;top:1091px;width:25px;height:1px;background:#b0b0b0;"></div>
<div class="abs" style="left:26px;top:1091px;width:885.5px;height:1px;background:#d6d6d6;"></div>
<div class="t" style="left:1.00px;top:1096.56px;font-size:12.8px;color:#333;width:25px;text-align:center;"><span>49</span></div>
<div class="abs" style="left:1px;top:1111px;width:25px;height:1px;background:#b0b0b0;"></div>
<div class="abs" style="left:26px;top:1111px;width:885.5px;height:1px;background:#d6d6d6;"></div>
<div class="t" style="left:1.00px;top:1116.56px;font-size:12.8px;color:#333;width:25px;text-align:center;"><span>50</span></div>
<div class="abs" style="left:1px;top:1131px;width:25px;height:1px;background:#b0b0b0;"></div>
<div class="abs" style="left:26px;top:1131px;width:885.5px;height:1px;background:#d6d6d6;"></div>
<div class="t" style="left:1.00px;top:1136.56px;font-size:12.8px;color:#333;width:25px;text-align:center;"><span>51</span></div>
<div class="abs" style="left:1px;top:1151px;width:25px;height:1px;background:#b0b0b0;"></div>
<div class="abs" style="left:26px;top:1151px;width:885.5px;height:1px;background:#d6d6d6;"></div>
<div class="t" style="left:1.00px;top:1156.56px;font-size:12.8px;color:#333;width:25px;text-align:center;"><span>52</span></div>
<div class="abs" style="left:1px;top:1171px;width:25px;height:1px;background:#b0b0b0;"></div>
<div class="abs" style="left:26px;top:1171px;width:885.5px;height:1px;background:#d6d6d6;"></div>
<div class="t" style="left:1.00px;top:1176.56px;font-size:12.8px;color:#333;width:25px;text-align:center;"><span>53</span></div>
<div class="abs" style="left:1px;top:1191px;width:25px;height:1px;background:#b0b0b0;"></div>
<div class="abs" style="left:26px;top:1191px;width:885.5px;height:1px;background:#d6d6d6;"></div>
<div class="t" style="left:1.00px;top:1196.56px;font-size:12.8px;color:#333;width:25px;text-align:center;"><span>54</span></div>
<div class="abs" style="left:1px;top:1211px;width:25px;height:1px;background:#b0b0b0;"></div>
<div class="abs" style="left:26px;top:1211px;width:885.5px;height:1px;background:#d6d6d6;"></div>
<div class="t" style="left:1.00px;top:1216.56px;font-size:12.8px;color:#333;width:25px;text-align:center;"><span>55</span></div>
<div class="abs" style="left:1px;top:1231px;width:25px;height:1px;background:#b0b0b0;"></div>
<div class="abs" style="left:26px;top:1231px;width:885.5px;height:1px;background:#d6d6d6;"></div>
<div class="t" style="left:1.00px;top:1236.56px;font-size:12.8px;color:#333;width:25px;text-align:center;"><span>56</span></div>
<div class="abs" style="left:209.5px;top:172px;width:1px;height:1073px;background:#d6d6d6;"></div>
<div class="abs" style="left:303.0px;top:172px;width:1px;height:1073px;background:#d6d6d6;"></div>
<div class="abs" style="left:401.5px;top:172px;width:1px;height:1073px;background:#d6d6d6;"></div>
<div class="abs" style="left:488.5px;top:172px;width:1px;height:1073px;background:#d6d6d6;"></div>
<div class="abs" style="left:587.0px;top:172px;width:1px;height:1073px;background:#d6d6d6;"></div>
<div class="abs" style="left:651.0px;top:172px;width:1px;height:1073px;background:#d6d6d6;"></div>
<div class="abs" style="left:715.0px;top:132px;width:1px;height:1113px;background:#d6d6d6;"></div>
<div class="abs" style="left:779.0px;top:132px;width:1px;height:1113px;background:#d6d6d6;"></div>
<div class="abs" style="left:843.0px;top:132px;width:1px;height:1113px;background:#d6d6d6;"></div>
<div class="abs" style="left:907.0px;top:132px;width:1px;height:1113px;background:#d6d6d6;"></div>
<div class="abs" style="left:911px;top:132px;width:1px;height:1113px;background:#d6d6d6;"></div>
<div class="t" style="left:29.00px;top:135.61px;font-size:13.1px;color:#111;letter-spacing:0.116px;"><span>ausgegeben durch S. Müller (SM) am 21.03.2022</span></div>
<div class="t" style="left:29.00px;top:175.61px;font-size:13.1px;color:#111;letter-spacing:0.271px;"><span>Bezeichnung</span></div>
<div class="t" style="left:213.20px;top:175.61px;font-size:13.1px;color:#111;letter-spacing:0.229px;"><span>Fläche in m²</span></div>
<div class="t" style="left:306.20px;top:175.61px;font-size:13.1px;color:#111;letter-spacing:0.276px;"><span>Datum Beginn</span></div>
<div class="t" style="left:405.00px;top:175.61px;font-size:13.1px;color:#111;letter-spacing:0.150px;"><span>Datum Ende</span></div>
<div class="t" style="left:492.20px;top:175.61px;font-size:13.1px;color:#111;letter-spacing:0.443px;"><span>Bemerkungen</span></div>
<div class="t" style="left:29.00px;top:195.61px;font-size:13.1px;color:#111;letter-spacing:0.620px;"><span>Bombenfund Musterdorf</span></div>
<div class="t" style="left:227.90px;top:195.61px;font-size:13.1px;color:#111;letter-spacing:-0.361px;"><span>780361,2881</span></div>
<div class="t" style="left:492.20px;top:195.61px;font-size:13.1px;color:#111;letter-spacing:-0.453px;"><span>500</span></div>
<svg style="left:489.500px;top:192px" width="6" height="6" viewBox="0 0 6 6"><path d="M0 0 L5.500 0 L0 5.500 Z" fill="#217346"/></svg>
<div class="abs" style="left:912px;top:113px;width:22px;height:1132px;background:#e6e6e6;"></div>
<div class="abs" style="left:915px;top:113px;width:15px;height:15.5px;background:#fff;border:1.200px solid #8f8f8f"></div>
<div class="abs" style="left:915px;top:131px;width:15px;height:1078.5px;background:#fff;border:1.200px solid #8f8f8f"></div>
<div class="abs" style="left:915px;top:1210px;width:15px;height:21px;background:#dddddd;"></div>
<div class="abs" style="left:915px;top:1231.5px;width:15px;height:14.3px;background:#fff;border:1.200px solid #8f8f8f"></div>
<svg style="left:915px;top:113px" width="15" height="1137" viewBox="2103 118 15 1137"><path d="M2107 128 L2110.500 123.500 L2114 128 Z M2107 1241.500 L2110.500 1246 L2114 1241.500 Z" fill="#555"/></svg>
<div class="abs" style="left:0px;top:1246px;width:934px;height:27px;background:#e6e6e6;"></div>
<div class="abs" style="left:0px;top:1245px;width:101px;height:1px;background:#ababab;"></div>
<div class="abs" style="left:289.5px;top:1245px;width:622px;height:1px;background:#ababab;"></div>
<div class="abs" style="left:101px;top:1245px;width:188.5px;height:25px;background:#fff;border-left:1px solid #ababab;border-right:1px solid #ababab"></div>
<div class="abs" style="left:101px;top:1269px;width:188.5px;height:2px;background:#217346;"></div>
<div class="t" style="left:113.50px;top:1252.33px;font-size:12.6px;color:#217346;letter-spacing:-0.019px;font-weight:bold;"><span>Beschreibung Krisengebiet</span></div>
<div class="t" style="left:305.30px;top:1252.33px;font-size:12.6px;color:#444;letter-spacing:0.013px;"><span>Zusammenfassung</span></div>
<div class="abs" style="left:430px;top:1249px;width:1px;height:20px;background:#ababab;"></div>
<div class="t" style="left:446.00px;top:1252.33px;font-size:12.6px;color:#444;letter-spacing:0.057px;"><span>FW-Obj</span></div>
<div class="t" style="left:499.00px;top:1251.15px;font-size:14px;color:#217346;font-weight:bold;"><span>...</span></div>
<svg style="left:0;top:1245px" width="933" height="30" viewBox="1188 1250 933 30"><path d="M1221.500 1259.500 L1217.500 1263.500 L1221.500 1267.500 Z" fill="#c6c6c6"/><path d="M1244.500 1259 L1249 1263.500 L1244.500 1268 Z" fill="#217346"/><circle cx="1720" cy="1263.500" r="7.500" fill="none" stroke="#767676" stroke-width="1.200"/><path d="M1716 1263.500 L1724 1263.500 M1720 1259.500 L1720 1267.500" stroke="#767676" stroke-width="1.300"/><circle cx="1748.500" cy="1258.500" r="0.900" fill="#999"/><circle cx="1748.500" cy="1263.500" r="0.900" fill="#999"/><circle cx="1748.500" cy="1268.500" r="0.900" fill="#999"/><rect x="1765.500" y="1257.600" width="13.800" height="14" fill="#fff" stroke="#8f8f8f" stroke-width="1.200"/><path d="M1774.500 1261 L1770.500 1264.600 L1774.500 1268.200 Z" fill="#666"/><rect x="1780.500" y="1257.600" width="273" height="14" fill="#fff" stroke="#8f8f8f" stroke-width="1.200"/><rect x="2054.500" y="1257" width="30.500" height="15" fill="#dddddd"/><rect x="2085.700" y="1257.600" width="13.800" height="14" fill="#fff" stroke="#8f8f8f" stroke-width="1.200"/><path d="M2090.800 1261 L2094.800 1264.600 L2090.800 1268.200 Z" fill="#666"/></svg>
<div class="abs" style="left:0px;top:1273px;width:934px;height:23px;background:#f3f2f1;"></div>
<div class="abs" style="left:0px;top:1272.5px;width:934px;height:1px;background:#d0d0d0;"></div>
<div class="t" style="left:9.00px;top:1279.19px;font-size:11px;color:#444;letter-spacing:-0.058px;"><span>Bereit</span></div>
<div class="t" style="left:74.30px;top:1279.19px;font-size:11px;color:#444;letter-spacing:0.115px;"><span>Barrierefreiheit: Keine Probleme</span></div>
<div class="abs" style="left:619.5px;top:1273.5px;width:38.5px;height:21.5px;background:#d2d2d2;"></div>
<svg style="left:0;top:1273px" width="933" height="24" viewBox="1188 1278 933 24"><circle class="xg" cx="1250.500" cy="1283.500" r="1.600"/><path class="xg" d="M1245.500 1286.500 L1255 1286.500 M1250.500 1286.500 L1250 1292 L1247 1296.500 M1252.500 1292.500 L1254.500 1295 L1259 1288.500"/><path class="xg" d="M1820.500 1283.500 L1832.500 1283.500 L1832.500 1295.500 L1820.500 1295.500 Z M1820.500 1287.500 L1832.500 1287.500 M1820.500 1291.500 L1832.500 1291.500 M1824.500 1283.500 L1824.500 1295.500 M1828.500 1283.500 L1828.500 1295.500"/><path class="xg" d="M1860.500 1283.500 L1873.500 1283.500 L1873.500 1295.500 L1860.500 1295.500 Z M1863.500 1286.500 L1870.500 1286.500 L1870.500 1292.500 L1863.500 1292.500 Z M1865 1288.500 L1869 1288.500 M1865 1290.500 L1869 1290.500"/><path class="xg" d="M1900.500 1283.500 L1913.500 1283.500 L1913.500 1295.500 L1900.500 1295.500 Z M1904.500 1283.500 L1904.500 1290.500 L1913.500 1290.500 M1909 1283.500 L1909 1290.500"/><path class="xg" d="M1933.500 1289.500 L1940.500 1289.500 M2050.500 1289.500 L2057.500 1289.500 M2054 1286 L2054 1293"/><path d="M1946 1289.500 L2046 1289.500" stroke="#8a8a8a" stroke-width="1"/><rect x="1994" y="1283.500" width="5" height="12" fill="#5f5f5f"/></svg>
<div class="t" style="left:884.30px;top:1279.19px;font-size:11px;color:#444;letter-spacing:-0.461px;"><span>100 %</span></div>
<div class="abs" style="left:0px;top:0px;width:1px;height:1296px;background:#7e807e;"></div>
<div class="abs" style="left:0px;top:0px;width:934px;height:1px;background:#868886;"></div>
<div class="abs" style="left:0px;top:1295px;width:934px;height:1px;background:#848484;"></div>
<div class="abs" style="left:933px;top:0px;width:1px;height:1296px;background:#8c8c8c;"></div>
</div>
</body></html>
